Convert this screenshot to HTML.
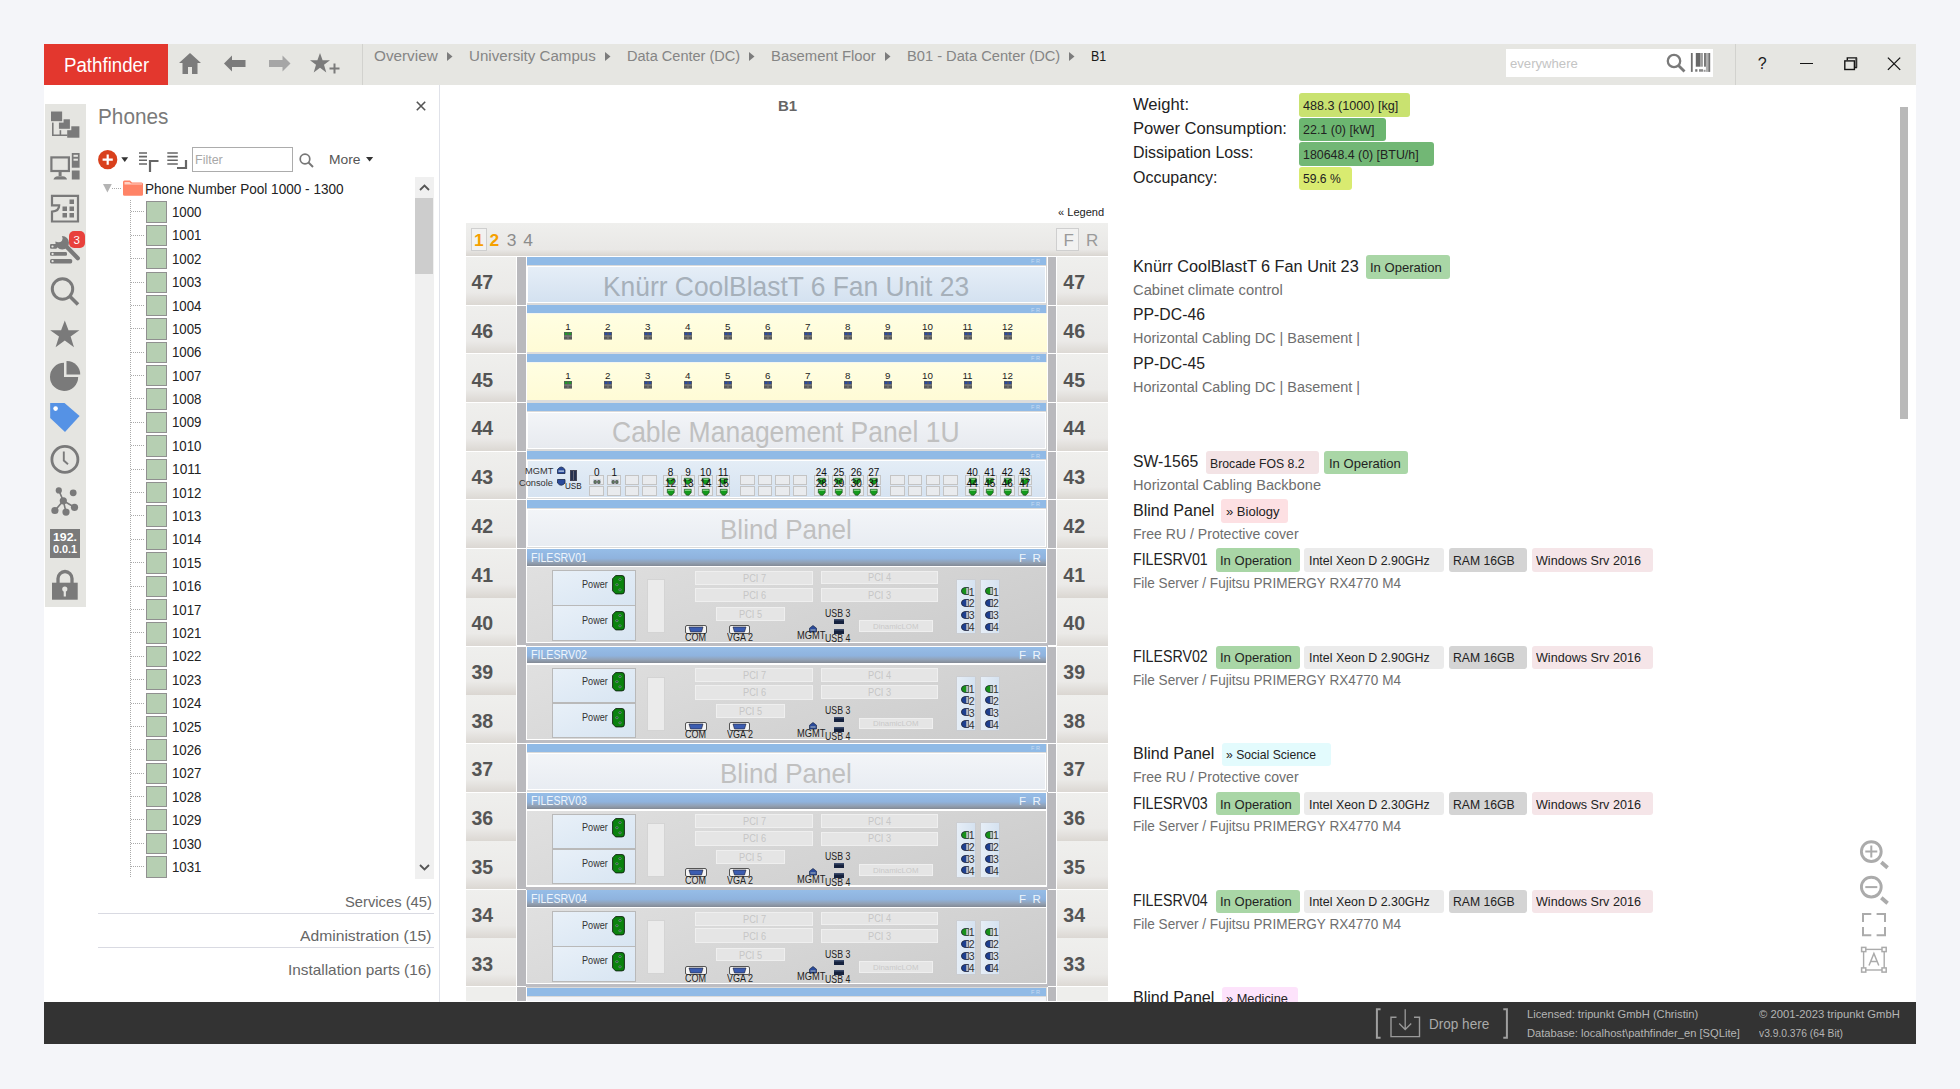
<!DOCTYPE html><html><head><meta charset="utf-8"><style>
html,body{margin:0;padding:0;width:1960px;height:1089px;overflow:hidden;background:#f4f5f9}
body{position:relative;font-family:"Liberation Sans",sans-serif}
.r{position:absolute}
.t{position:absolute;white-space:nowrap;line-height:1;font-family:"Liberation Sans",sans-serif}
svg.r{overflow:visible}
</style></head><body>
<div class="r" style="left:44.0px;top:44.0px;width:1872.0px;height:41.0px;background:#e6e6e2"></div>
<div class="r" style="left:44.0px;top:44.0px;width:124.0px;height:41.0px;background:#e3372e"></div>
<div class="t" style="left:64.2px;top:55.1px;font-size:20px;color:#fff;letter-spacing:0.000px;transform:scaleX(0.9345);transform-origin:0 0;">Pathfinder</div>
<div class="r" style="left:362.0px;top:44.0px;width:1.0px;height:41.0px;background:#d2d2ce"></div>
<div class="r" style="left:1735.0px;top:44.0px;width:1.0px;height:41.0px;background:#d2d2ce"></div>
<div class="t" style="left:374.3px;top:47.9px;font-size:15.5px;color:#858585;letter-spacing:0.000px;transform:scaleX(0.9861);transform-origin:0 0;">Overview</div>
<svg class="r" style="left:446.6px;top:52px" width="6" height="9"><path d="M0 0L5.5 4.5L0 9Z" fill="#7c7c7c"/></svg>
<div class="t" style="left:469.0px;top:47.9px;font-size:15.5px;color:#858585;letter-spacing:0.000px;transform:scaleX(0.9749);transform-origin:0 0;">University Campus</div>
<svg class="r" style="left:605.0px;top:52px" width="6" height="9"><path d="M0 0L5.5 4.5L0 9Z" fill="#7c7c7c"/></svg>
<div class="t" style="left:626.8px;top:47.9px;font-size:15.5px;color:#858585;letter-spacing:0.000px;transform:scaleX(0.9387);transform-origin:0 0;">Data Center (DC)</div>
<svg class="r" style="left:748.9px;top:52px" width="6" height="9"><path d="M0 0L5.5 4.5L0 9Z" fill="#7c7c7c"/></svg>
<div class="t" style="left:771.0px;top:47.9px;font-size:15.5px;color:#858585;letter-spacing:0.000px;transform:scaleX(0.9569);transform-origin:0 0;">Basement Floor</div>
<svg class="r" style="left:885.4px;top:52px" width="6" height="9"><path d="M0 0L5.5 4.5L0 9Z" fill="#7c7c7c"/></svg>
<div class="t" style="left:906.7px;top:47.9px;font-size:15.5px;color:#858585;letter-spacing:0.000px;transform:scaleX(0.9460);transform-origin:0 0;">B01 - Data Center (DC)</div>
<svg class="r" style="left:1069.0px;top:52px" width="6" height="9"><path d="M0 0L5.5 4.5L0 9Z" fill="#7c7c7c"/></svg>
<div class="t" style="left:1090.6px;top:47.7px;font-size:15.5px;color:#1a1a1a;letter-spacing:0.000px;transform:scaleX(0.8017);transform-origin:0 0;">B1</div>
<div class="r" style="left:1506.0px;top:49.2px;width:207.0px;height:28.2px;background:#fff"></div>
<div class="t" style="left:1510.0px;top:57.0px;font-size:13px;color:#c4c4c4;letter-spacing:0.000px;transform:scaleX(1.0089);transform-origin:0 0;">everywhere</div>
<svg class="r" style="left:178.0px;top:52.0px" width="24" height="22" viewBox="0 0 24 22"><path d="M12 1L1 11H4.5V22H10V15H14V22H19.5V11H23Z" fill="#7b7b7b"/></svg>
<svg class="r" style="left:224.0px;top:55.0px" width="22" height="17" viewBox="0 0 22 17"><path d="M0 8.5L8 0.5V5H21.5V12H8V16.5Z" fill="#7b7b7b"/></svg>
<svg class="r" style="left:268.5px;top:55.0px" width="22" height="17" viewBox="0 0 22 17"><path d="M21.5 8.5L13.5 0.5V5H0V12H13.5V16.5Z" fill="#a6a6a6"/></svg>
<svg class="r" style="left:309.0px;top:52.0px" width="32" height="22" viewBox="0 0 32 22"><path d="M11 1L13.6 8.3H21L15 12.8L17.3 20.5L11 15.8L4.7 20.5L7 12.8L1 8.3H8.4Z" fill="#7b7b7b"/><path d="M20.5 16.5H30.5M25.5 11.5V21.5" stroke="#7b7b7b" stroke-width="2"/></svg>
<svg class="r" style="left:1666.0px;top:53.0px" width="20" height="20" viewBox="0 0 20 20"><circle cx="8" cy="8" r="6.2" fill="none" stroke="#7a7a7a" stroke-width="2.3"/><path d="M12.5 12.5L18.5 18.5" stroke="#7a7a7a" stroke-width="2.8"/></svg>
<svg class="r" style="left:1690.0px;top:53.0px" width="21" height="20" viewBox="0 0 21 20"><rect x="0.9" y="0" width="1.8" height="18.9" fill="#6e6e6e"/><rect x="5.8" y="0" width="4.3" height="13.7" fill="#686868"/><rect x="10.1" y="0" width="2.8" height="13.7" fill="#9c9c9c"/><rect x="14.1" y="0" width="1.8" height="13.7" fill="#6a6a6a"/><rect x="15.9" y="0" width="2.4" height="18.9" fill="#b0b0b0"/><rect x="18.3" y="0" width="1.9" height="18.9" fill="#707070"/><rect x="5.2" y="16.2" width="2.2" height="2.5" fill="#777"/><rect x="9" y="16.2" width="4" height="2.5" fill="#888"/><rect x="13.6" y="16.8" width="2" height="2" fill="#999"/></svg>
<div class="t" style="left:1757.8px;top:56.3px;font-size:16px;color:#1a1a1a;letter-spacing:0.000px;">?</div>
<div class="r" style="left:1800.0px;top:62.5px;width:13.0px;height:1.7px;background:#151515"></div>
<svg class="r" style="left:1843.0px;top:56.0px" width="15" height="15" viewBox="0 0 15 15"><rect x="1.8" y="4.9" width="9.6" height="8.6" fill="none" stroke="#151515" stroke-width="1.4"/><path d="M4.3 4.2V1.9H13.4V11.5H11.5" fill="none" stroke="#151515" stroke-width="1.4"/><rect x="12.6" y="2" width="1.6" height="9.5" fill="#333"/></svg>
<svg class="r" style="left:1887.0px;top:57.0px" width="14" height="14" viewBox="0 0 14 14"><path d="M0.9 0.6L13.2 12.9M13.2 0.6L0.9 12.9" stroke="#151515" stroke-width="1.3"/></svg>
<div class="r" style="left:44.0px;top:85.0px;width:1872.0px;height:916.5px;background:#fff"></div>
<div class="r" style="left:44.5px;top:104.0px;width:41.9px;height:502.6px;background:#e5e5e1"></div>
<div class="r" style="left:439.0px;top:85.0px;width:1.2px;height:916.5px;background:#e0e2e9"></div>
<svg class="r" style="left:46.0px;top:106.0px" width="38" height="36" viewBox="0 0 38 36"><path d="M6.8 15.9V29.3H21.5M14.4 23.5V28.8" fill="none" stroke="#7a7a7a" stroke-width="1.6"/><rect x="21.2" y="20.3" width="12.2" height="11.4" fill="#7a7a7a"/><rect x="12.2" y="12.6" width="12.4" height="10.9" fill="#7a7a7a" stroke="#e5e5e1" stroke-width="1.4"/><rect x="4.3" y="4.8" width="12.55" height="11.1" fill="#7a7a7a" stroke="#e5e5e1" stroke-width="1.4"/></svg>
<svg class="r" style="left:50.0px;top:152.0px" width="31" height="29" viewBox="0 0 31 29"><rect x="1.4" y="5.4" width="17.5" height="13.6" fill="none" stroke="#7a7a7a" stroke-width="2.2"/><rect x="8.6" y="19" width="3" height="5" fill="#7a7a7a"/><path d="M3.5 27.5Q4 24.5 8 24.3H12.5Q16.5 24.5 17 27.5Z" fill="#7a7a7a"/><rect x="21.8" y="1" width="7.8" height="14.7" fill="#7a7a7a"/><rect x="21.8" y="18.5" width="7.8" height="9" fill="#7a7a7a"/><rect x="23.5" y="2.8" width="4.4" height="2" fill="#e5e5e1"/><rect x="23.5" y="6.7" width="4.4" height="2" fill="#e5e5e1"/></svg>
<svg class="r" style="left:50.0px;top:194.0px" width="30" height="29" viewBox="0 0 30 29"><path d="M2 11.3V1.9H28V27.5H2V17.7Q9.2 17.2 9.2 11.3Z" fill="none" stroke="#7a7a7a" stroke-width="2.2" stroke-linejoin="miter"/><rect x="19.5" y="5.5" width="4.5" height="4.5" fill="#7a7a7a"/><rect x="12.5" y="12.5" width="4.5" height="4.5" fill="#7a7a7a"/><rect x="19.5" y="12.5" width="4.5" height="4.5" fill="#7a7a7a"/><rect x="12.5" y="19" width="4.5" height="4.5" fill="#7a7a7a"/><rect x="19.5" y="19" width="4.5" height="4.5" fill="#7a7a7a"/></svg>
<svg class="r" style="left:46.0px;top:226.0px" width="40" height="40" viewBox="0 0 40 40"><rect x="4" y="18.1" width="7" height="4.7" rx="1.2" fill="#7a7a7a"/><rect x="4" y="26" width="17" height="3.8" rx="1.2" fill="#7a7a7a"/><rect x="4" y="33" width="22.2" height="4.4" rx="1.6" fill="#7a7a7a"/><circle cx="6.5" cy="20.5" r="1.1" fill="#e5e5e1"/><circle cx="6.6" cy="27.9" r="1.1" fill="#e5e5e1"/><circle cx="6.6" cy="35.2" r="1.1" fill="#e5e5e1"/><path d="M17 17L31.8 32.2" stroke="#e5e5e1" stroke-width="7.5" stroke-linecap="round"/><path d="M17 17L31.8 32.2" stroke="#7a7a7a" stroke-width="4.2" stroke-linecap="round"/><circle cx="16.2" cy="16.8" r="6.8" fill="#7a7a7a"/><circle cx="12.6" cy="12.3" r="3.9" fill="#e5e5e1"/><path d="M8 9L12.6 12.3L10 16Z" fill="#e5e5e1"/></svg>
<div class="r" style="left:69.3px;top:231.0px;width:15.7px;height:16.6px;background:#e8413c;border-radius:5px"></div>
<div class="t" style="left:73.6px;top:235.3px;font-size:11.5px;color:#fff;letter-spacing:0.000px;">3</div>
<svg class="r" style="left:50.0px;top:276.0px" width="31" height="31" viewBox="0 0 31 31"><circle cx="12.5" cy="13" r="10.2" fill="none" stroke="#7a7a7a" stroke-width="3"/><path d="M19.5 20L28 28.5" stroke="#7a7a7a" stroke-width="3.5"/></svg>
<svg class="r" style="left:50.0px;top:320.0px" width="30" height="28" viewBox="0 0 30 28"><path d="M14.8 0.5L18.5 10.2H29.4L20.6 16.6L24 27.2L14.8 20.6L5.6 27.2L9 16.6L0.2 10.2H11.1Z" fill="#7a7a7a"/></svg>
<svg class="r" style="left:50.0px;top:360.0px" width="31" height="32" viewBox="0 0 31 32"><path d="M14 2.8V17H28.2A14.1 14.1 0 1 1 14 2.8Z" fill="#7a7a7a"/><path d="M16.5 1H17A13.3 13.3 0 0 1 30.2 14.5H16.5Z" fill="#7a7a7a"/></svg>
<svg class="r" style="left:50.0px;top:402.0px" width="30" height="31" viewBox="0 0 30 31"><path d="M0.2 1H14.5L29.6 14L15 30L0.2 16Z" fill="#5592e5"/><circle cx="5.6" cy="6.6" r="2.3" fill="#fff"/></svg>
<svg class="r" style="left:50.0px;top:444.0px" width="30" height="30" viewBox="0 0 30 30"><circle cx="14.9" cy="15.4" r="13" fill="none" stroke="#7a7a7a" stroke-width="2.8"/><path d="M13.8 7.5V16.5L18 20.2" fill="none" stroke="#7a7a7a" stroke-width="1.9"/></svg>
<svg class="r" style="left:50.0px;top:486.0px" width="30" height="30" viewBox="0 0 30 30"><path d="M8.8 4.4L13.3 14.8L4.9 24.5M13.3 14.8L16 26.1M13.3 14.8L24.5 21.3" fill="none" stroke="#7a7a7a" stroke-width="1.6"/><circle cx="13.3" cy="14.8" r="3.6" fill="#7a7a7a"/><circle cx="8.8" cy="4.4" r="3.1" fill="#7a7a7a"/><circle cx="23.2" cy="6.8" r="3.4" fill="#7a7a7a"/><circle cx="4.9" cy="24.5" r="3.6" fill="#7a7a7a"/><circle cx="16" cy="26.1" r="3.6" fill="#7a7a7a"/><circle cx="24.5" cy="21.3" r="3.6" fill="#7a7a7a"/></svg>
<div class="r" style="left:50.4px;top:529.0px;width:29.3px;height:28.9px;background:#7a7a7a"></div>
<div class="t" style="left:53.0px;top:532.5px;font-size:10px;color:#fff;letter-spacing:0.000px;transform:scaleX(1.2331);transform-origin:0 0;font-weight:bold;">192.</div>
<div class="t" style="left:53.0px;top:545.0px;font-size:10px;color:#fff;letter-spacing:0.000px;transform:scaleX(1.0791);transform-origin:0 0;font-weight:bold;">0.0.1</div>
<svg class="r" style="left:50.0px;top:569.0px" width="30" height="32" viewBox="0 0 30 32"><path d="M8 14V9.5A7 7 0 0 1 22 9.5V14" fill="none" stroke="#7a7a7a" stroke-width="3.3"/><rect x="2" y="13.7" width="25.7" height="17" fill="#7a7a7a"/><circle cx="14.8" cy="20" r="2.6" fill="#e5e5e1"/><rect x="13.7" y="20" width="2.2" height="7.5" fill="#e5e5e1"/></svg>
<div class="t" style="left:97.7px;top:106.3px;font-size:22.5px;color:#7a7a7a;letter-spacing:0.000px;transform:scaleX(0.9225);transform-origin:0 0;">Phones</div>
<svg class="r" style="left:415.5px;top:101.0px" width="10" height="10" viewBox="0 0 10 10"><path d="M0.8 0.8L9.2 9.2M9.2 0.8L0.8 9.2" stroke="#555" stroke-width="1.6"/></svg>
<svg class="r" style="left:98.0px;top:149.8px" width="32" height="20" viewBox="0 0 32 20"><circle cx="9.7" cy="9.65" r="9.6" fill="#d9401c"/><path d="M4.6 9.65H14.8M9.7 4.5V14.8" stroke="#fff" stroke-width="2.2"/><path d="M23.3 7.2H30.2L26.75 11.9Z" fill="#333"/></svg>
<svg class="r" style="left:139.0px;top:152.0px" width="48" height="18" viewBox="0 0 48 18"><path d="M0 1H8M0 4.6H8M0 8.3H8M0 12H8" stroke="#666" stroke-width="1.6"/><path d="M11 20V9H19.5" fill="none" stroke="#666" stroke-width="2.2"/><path d="M28.3 1H38.8M28.3 4.6H38.8M28.3 8.3H38.8M28.3 12H38.8" stroke="#666" stroke-width="1.6"/><path d="M47 8V16H38" fill="none" stroke="#666" stroke-width="2.2"/></svg>
<div class="r" style="left:191.9px;top:147.3px;width:100.7px;height:24.3px;background:#fff;border:1px solid #acacac;box-sizing:border-box"></div>
<div class="t" style="left:195.3px;top:153.2px;font-size:13.2px;color:#a8a8a8;letter-spacing:0.000px;transform:scaleX(0.9477);transform-origin:0 0;">Filter</div>
<svg class="r" style="left:299.0px;top:153.0px" width="15" height="15" viewBox="0 0 15 15"><circle cx="6" cy="6" r="4.8" fill="none" stroke="#777" stroke-width="1.7"/><path d="M9.5 9.5L14 14" stroke="#777" stroke-width="2"/></svg>
<div class="t" style="left:328.5px;top:153.0px;font-size:13.5px;color:#555;letter-spacing:0.000px;transform:scaleX(1.0241);transform-origin:0 0;">More</div>
<svg class="r" style="left:365.5px;top:157.0px" width="8" height="5" viewBox="0 0 8 5"><path d="M0 0H7.2L3.6 4.5Z" fill="#333"/></svg>
<svg class="r" style="left:103.0px;top:184.0px" width="9" height="9" viewBox="0 0 9 9"><path d="M0 0H8.8L4.4 8.5Z" fill="#b4b4b4"/></svg>
<div class="r" style="left:112.0px;top:187.8px;width:10.0px;height:1.0px;background:repeating-linear-gradient(90deg,#aaa 0 1px,transparent 1px 2px)"></div>
<svg class="r" style="left:123.0px;top:180.4px" width="20" height="16" viewBox="0 0 20 16"><path d="M0 2Q0 0.5 1.5 0.5H7L9 2.5H18.5Q20 2.5 20 4V14.5Q20 15.8 18.5 15.8H1.5Q0 15.8 0 14.5Z" fill="#ff8366"/><path d="M1.5 2H6.5L8 3.5H19V4.5H1.5Z" fill="#ffd2c4"/></svg>
<div class="t" style="left:145.3px;top:182.5px;font-size:13.8px;color:#222;letter-spacing:0.000px;transform:scaleX(0.9847);transform-origin:0 0;">Phone Number Pool 1000 - 1300</div>
<div class="r" style="left:130.2px;top:200.0px;width:1.0px;height:678.0px;background:repeating-linear-gradient(180deg,#aaa 0 1px,transparent 1px 2px)"></div>
<div class="r" style="left:131.0px;top:211.3px;width:14.0px;height:1.0px;background:repeating-linear-gradient(90deg,#aaa 0 1px,transparent 1px 2px)"></div>
<div class="r" style="left:146.0px;top:201.3px;width:21.0px;height:21.4px;background:#b6cfb2;border:1px solid #909090;box-sizing:border-box"></div>
<div class="t" style="left:172.3px;top:205.9px;font-size:13.8px;color:#222;letter-spacing:0.000px;transform:scaleX(0.9609);transform-origin:0 0;">1000</div>
<div class="r" style="left:131.0px;top:234.7px;width:14.0px;height:1.0px;background:repeating-linear-gradient(90deg,#aaa 0 1px,transparent 1px 2px)"></div>
<div class="r" style="left:146.0px;top:224.7px;width:21.0px;height:21.4px;background:#b6cfb2;border:1px solid #909090;box-sizing:border-box"></div>
<div class="t" style="left:172.3px;top:229.3px;font-size:13.8px;color:#222;letter-spacing:0.000px;transform:scaleX(0.9609);transform-origin:0 0;">1001</div>
<div class="r" style="left:131.0px;top:258.1px;width:14.0px;height:1.0px;background:repeating-linear-gradient(90deg,#aaa 0 1px,transparent 1px 2px)"></div>
<div class="r" style="left:146.0px;top:248.1px;width:21.0px;height:21.4px;background:#b6cfb2;border:1px solid #909090;box-sizing:border-box"></div>
<div class="t" style="left:172.3px;top:252.7px;font-size:13.8px;color:#222;letter-spacing:0.000px;transform:scaleX(0.9609);transform-origin:0 0;">1002</div>
<div class="r" style="left:131.0px;top:281.5px;width:14.0px;height:1.0px;background:repeating-linear-gradient(90deg,#aaa 0 1px,transparent 1px 2px)"></div>
<div class="r" style="left:146.0px;top:271.5px;width:21.0px;height:21.4px;background:#b6cfb2;border:1px solid #909090;box-sizing:border-box"></div>
<div class="t" style="left:172.3px;top:276.1px;font-size:13.8px;color:#222;letter-spacing:0.000px;transform:scaleX(0.9609);transform-origin:0 0;">1003</div>
<div class="r" style="left:131.0px;top:304.9px;width:14.0px;height:1.0px;background:repeating-linear-gradient(90deg,#aaa 0 1px,transparent 1px 2px)"></div>
<div class="r" style="left:146.0px;top:294.9px;width:21.0px;height:21.4px;background:#b6cfb2;border:1px solid #909090;box-sizing:border-box"></div>
<div class="t" style="left:172.3px;top:299.5px;font-size:13.8px;color:#222;letter-spacing:0.000px;transform:scaleX(0.9609);transform-origin:0 0;">1004</div>
<div class="r" style="left:131.0px;top:328.2px;width:14.0px;height:1.0px;background:repeating-linear-gradient(90deg,#aaa 0 1px,transparent 1px 2px)"></div>
<div class="r" style="left:146.0px;top:318.2px;width:21.0px;height:21.4px;background:#b6cfb2;border:1px solid #909090;box-sizing:border-box"></div>
<div class="t" style="left:172.3px;top:322.9px;font-size:13.8px;color:#222;letter-spacing:0.000px;transform:scaleX(0.9609);transform-origin:0 0;">1005</div>
<div class="r" style="left:131.0px;top:351.6px;width:14.0px;height:1.0px;background:repeating-linear-gradient(90deg,#aaa 0 1px,transparent 1px 2px)"></div>
<div class="r" style="left:146.0px;top:341.6px;width:21.0px;height:21.4px;background:#b6cfb2;border:1px solid #909090;box-sizing:border-box"></div>
<div class="t" style="left:172.3px;top:346.3px;font-size:13.8px;color:#222;letter-spacing:0.000px;transform:scaleX(0.9609);transform-origin:0 0;">1006</div>
<div class="r" style="left:131.0px;top:375.0px;width:14.0px;height:1.0px;background:repeating-linear-gradient(90deg,#aaa 0 1px,transparent 1px 2px)"></div>
<div class="r" style="left:146.0px;top:365.0px;width:21.0px;height:21.4px;background:#b6cfb2;border:1px solid #909090;box-sizing:border-box"></div>
<div class="t" style="left:172.3px;top:369.7px;font-size:13.8px;color:#222;letter-spacing:0.000px;transform:scaleX(0.9609);transform-origin:0 0;">1007</div>
<div class="r" style="left:131.0px;top:398.4px;width:14.0px;height:1.0px;background:repeating-linear-gradient(90deg,#aaa 0 1px,transparent 1px 2px)"></div>
<div class="r" style="left:146.0px;top:388.4px;width:21.0px;height:21.4px;background:#b6cfb2;border:1px solid #909090;box-sizing:border-box"></div>
<div class="t" style="left:172.3px;top:393.0px;font-size:13.8px;color:#222;letter-spacing:0.000px;transform:scaleX(0.9609);transform-origin:0 0;">1008</div>
<div class="r" style="left:131.0px;top:421.8px;width:14.0px;height:1.0px;background:repeating-linear-gradient(90deg,#aaa 0 1px,transparent 1px 2px)"></div>
<div class="r" style="left:146.0px;top:411.8px;width:21.0px;height:21.4px;background:#b6cfb2;border:1px solid #909090;box-sizing:border-box"></div>
<div class="t" style="left:172.3px;top:416.4px;font-size:13.8px;color:#222;letter-spacing:0.000px;transform:scaleX(0.9609);transform-origin:0 0;">1009</div>
<div class="r" style="left:131.0px;top:445.2px;width:14.0px;height:1.0px;background:repeating-linear-gradient(90deg,#aaa 0 1px,transparent 1px 2px)"></div>
<div class="r" style="left:146.0px;top:435.2px;width:21.0px;height:21.4px;background:#b6cfb2;border:1px solid #909090;box-sizing:border-box"></div>
<div class="t" style="left:172.3px;top:439.8px;font-size:13.8px;color:#222;letter-spacing:0.000px;transform:scaleX(0.9609);transform-origin:0 0;">1010</div>
<div class="r" style="left:131.0px;top:468.6px;width:14.0px;height:1.0px;background:repeating-linear-gradient(90deg,#aaa 0 1px,transparent 1px 2px)"></div>
<div class="r" style="left:146.0px;top:458.6px;width:21.0px;height:21.4px;background:#b6cfb2;border:1px solid #909090;box-sizing:border-box"></div>
<div class="t" style="left:172.3px;top:463.2px;font-size:13.8px;color:#222;letter-spacing:0.000px;transform:scaleX(0.9941);transform-origin:0 0;">1011</div>
<div class="r" style="left:131.0px;top:492.0px;width:14.0px;height:1.0px;background:repeating-linear-gradient(90deg,#aaa 0 1px,transparent 1px 2px)"></div>
<div class="r" style="left:146.0px;top:482.0px;width:21.0px;height:21.4px;background:#b6cfb2;border:1px solid #909090;box-sizing:border-box"></div>
<div class="t" style="left:172.3px;top:486.6px;font-size:13.8px;color:#222;letter-spacing:0.000px;transform:scaleX(0.9609);transform-origin:0 0;">1012</div>
<div class="r" style="left:131.0px;top:515.4px;width:14.0px;height:1.0px;background:repeating-linear-gradient(90deg,#aaa 0 1px,transparent 1px 2px)"></div>
<div class="r" style="left:146.0px;top:505.4px;width:21.0px;height:21.4px;background:#b6cfb2;border:1px solid #909090;box-sizing:border-box"></div>
<div class="t" style="left:172.3px;top:510.0px;font-size:13.8px;color:#222;letter-spacing:0.000px;transform:scaleX(0.9609);transform-origin:0 0;">1013</div>
<div class="r" style="left:131.0px;top:538.8px;width:14.0px;height:1.0px;background:repeating-linear-gradient(90deg,#aaa 0 1px,transparent 1px 2px)"></div>
<div class="r" style="left:146.0px;top:528.8px;width:21.0px;height:21.4px;background:#b6cfb2;border:1px solid #909090;box-sizing:border-box"></div>
<div class="t" style="left:172.3px;top:533.4px;font-size:13.8px;color:#222;letter-spacing:0.000px;transform:scaleX(0.9609);transform-origin:0 0;">1014</div>
<div class="r" style="left:131.0px;top:562.2px;width:14.0px;height:1.0px;background:repeating-linear-gradient(90deg,#aaa 0 1px,transparent 1px 2px)"></div>
<div class="r" style="left:146.0px;top:552.2px;width:21.0px;height:21.4px;background:#b6cfb2;border:1px solid #909090;box-sizing:border-box"></div>
<div class="t" style="left:172.3px;top:556.8px;font-size:13.8px;color:#222;letter-spacing:0.000px;transform:scaleX(0.9609);transform-origin:0 0;">1015</div>
<div class="r" style="left:131.0px;top:585.5px;width:14.0px;height:1.0px;background:repeating-linear-gradient(90deg,#aaa 0 1px,transparent 1px 2px)"></div>
<div class="r" style="left:146.0px;top:575.5px;width:21.0px;height:21.4px;background:#b6cfb2;border:1px solid #909090;box-sizing:border-box"></div>
<div class="t" style="left:172.3px;top:580.2px;font-size:13.8px;color:#222;letter-spacing:0.000px;transform:scaleX(0.9609);transform-origin:0 0;">1016</div>
<div class="r" style="left:131.0px;top:608.9px;width:14.0px;height:1.0px;background:repeating-linear-gradient(90deg,#aaa 0 1px,transparent 1px 2px)"></div>
<div class="r" style="left:146.0px;top:598.9px;width:21.0px;height:21.4px;background:#b6cfb2;border:1px solid #909090;box-sizing:border-box"></div>
<div class="t" style="left:172.3px;top:603.6px;font-size:13.8px;color:#222;letter-spacing:0.000px;transform:scaleX(0.9609);transform-origin:0 0;">1017</div>
<div class="r" style="left:131.0px;top:632.3px;width:14.0px;height:1.0px;background:repeating-linear-gradient(90deg,#aaa 0 1px,transparent 1px 2px)"></div>
<div class="r" style="left:146.0px;top:622.3px;width:21.0px;height:21.4px;background:#b6cfb2;border:1px solid #909090;box-sizing:border-box"></div>
<div class="t" style="left:172.3px;top:626.9px;font-size:13.8px;color:#222;letter-spacing:0.000px;transform:scaleX(0.9609);transform-origin:0 0;">1021</div>
<div class="r" style="left:131.0px;top:655.7px;width:14.0px;height:1.0px;background:repeating-linear-gradient(90deg,#aaa 0 1px,transparent 1px 2px)"></div>
<div class="r" style="left:146.0px;top:645.7px;width:21.0px;height:21.4px;background:#b6cfb2;border:1px solid #909090;box-sizing:border-box"></div>
<div class="t" style="left:172.3px;top:650.3px;font-size:13.8px;color:#222;letter-spacing:0.000px;transform:scaleX(0.9609);transform-origin:0 0;">1022</div>
<div class="r" style="left:131.0px;top:679.1px;width:14.0px;height:1.0px;background:repeating-linear-gradient(90deg,#aaa 0 1px,transparent 1px 2px)"></div>
<div class="r" style="left:146.0px;top:669.1px;width:21.0px;height:21.4px;background:#b6cfb2;border:1px solid #909090;box-sizing:border-box"></div>
<div class="t" style="left:172.3px;top:673.7px;font-size:13.8px;color:#222;letter-spacing:0.000px;transform:scaleX(0.9609);transform-origin:0 0;">1023</div>
<div class="r" style="left:131.0px;top:702.5px;width:14.0px;height:1.0px;background:repeating-linear-gradient(90deg,#aaa 0 1px,transparent 1px 2px)"></div>
<div class="r" style="left:146.0px;top:692.5px;width:21.0px;height:21.4px;background:#b6cfb2;border:1px solid #909090;box-sizing:border-box"></div>
<div class="t" style="left:172.3px;top:697.1px;font-size:13.8px;color:#222;letter-spacing:0.000px;transform:scaleX(0.9609);transform-origin:0 0;">1024</div>
<div class="r" style="left:131.0px;top:725.9px;width:14.0px;height:1.0px;background:repeating-linear-gradient(90deg,#aaa 0 1px,transparent 1px 2px)"></div>
<div class="r" style="left:146.0px;top:715.9px;width:21.0px;height:21.4px;background:#b6cfb2;border:1px solid #909090;box-sizing:border-box"></div>
<div class="t" style="left:172.3px;top:720.5px;font-size:13.8px;color:#222;letter-spacing:0.000px;transform:scaleX(0.9609);transform-origin:0 0;">1025</div>
<div class="r" style="left:131.0px;top:749.3px;width:14.0px;height:1.0px;background:repeating-linear-gradient(90deg,#aaa 0 1px,transparent 1px 2px)"></div>
<div class="r" style="left:146.0px;top:739.3px;width:21.0px;height:21.4px;background:#b6cfb2;border:1px solid #909090;box-sizing:border-box"></div>
<div class="t" style="left:172.3px;top:743.9px;font-size:13.8px;color:#222;letter-spacing:0.000px;transform:scaleX(0.9609);transform-origin:0 0;">1026</div>
<div class="r" style="left:131.0px;top:772.7px;width:14.0px;height:1.0px;background:repeating-linear-gradient(90deg,#aaa 0 1px,transparent 1px 2px)"></div>
<div class="r" style="left:146.0px;top:762.7px;width:21.0px;height:21.4px;background:#b6cfb2;border:1px solid #909090;box-sizing:border-box"></div>
<div class="t" style="left:172.3px;top:767.3px;font-size:13.8px;color:#222;letter-spacing:0.000px;transform:scaleX(0.9609);transform-origin:0 0;">1027</div>
<div class="r" style="left:131.0px;top:796.0px;width:14.0px;height:1.0px;background:repeating-linear-gradient(90deg,#aaa 0 1px,transparent 1px 2px)"></div>
<div class="r" style="left:146.0px;top:786.0px;width:21.0px;height:21.4px;background:#b6cfb2;border:1px solid #909090;box-sizing:border-box"></div>
<div class="t" style="left:172.3px;top:790.7px;font-size:13.8px;color:#222;letter-spacing:0.000px;transform:scaleX(0.9609);transform-origin:0 0;">1028</div>
<div class="r" style="left:131.0px;top:819.4px;width:14.0px;height:1.0px;background:repeating-linear-gradient(90deg,#aaa 0 1px,transparent 1px 2px)"></div>
<div class="r" style="left:146.0px;top:809.4px;width:21.0px;height:21.4px;background:#b6cfb2;border:1px solid #909090;box-sizing:border-box"></div>
<div class="t" style="left:172.3px;top:814.1px;font-size:13.8px;color:#222;letter-spacing:0.000px;transform:scaleX(0.9609);transform-origin:0 0;">1029</div>
<div class="r" style="left:131.0px;top:842.8px;width:14.0px;height:1.0px;background:repeating-linear-gradient(90deg,#aaa 0 1px,transparent 1px 2px)"></div>
<div class="r" style="left:146.0px;top:832.8px;width:21.0px;height:21.4px;background:#b6cfb2;border:1px solid #909090;box-sizing:border-box"></div>
<div class="t" style="left:172.3px;top:837.5px;font-size:13.8px;color:#222;letter-spacing:0.000px;transform:scaleX(0.9609);transform-origin:0 0;">1030</div>
<div class="r" style="left:131.0px;top:866.2px;width:14.0px;height:1.0px;background:repeating-linear-gradient(90deg,#aaa 0 1px,transparent 1px 2px)"></div>
<div class="r" style="left:146.0px;top:856.2px;width:21.0px;height:21.4px;background:#b6cfb2;border:1px solid #909090;box-sizing:border-box"></div>
<div class="t" style="left:172.3px;top:860.8px;font-size:13.8px;color:#222;letter-spacing:0.000px;transform:scaleX(0.9609);transform-origin:0 0;">1031</div>
<div class="r" style="left:415.0px;top:177.2px;width:19.0px;height:701.6px;background:#f0f0f0"></div>
<div class="r" style="left:415.0px;top:198.0px;width:18.0px;height:76.0px;background:#cdcdcd"></div>
<svg class="r" style="left:419.0px;top:184.0px" width="11" height="7" viewBox="0 0 11 7"><path d="M1 6L5.5 1.5L10 6" fill="none" stroke="#555" stroke-width="1.8"/></svg>
<svg class="r" style="left:419.0px;top:864.0px" width="11" height="7" viewBox="0 0 11 7"><path d="M1 1L5.5 5.5L10 1" fill="none" stroke="#555" stroke-width="1.8"/></svg>
<div class="t" style="left:344.5px;top:893.7px;font-size:15px;color:#666;letter-spacing:0.000px;transform:scaleX(0.9834);transform-origin:0 0;">Services (45)</div>
<div class="r" style="left:98.0px;top:913.0px;width:336.2px;height:1.2px;background:#d9dae2"></div>
<div class="t" style="left:300.0px;top:927.9px;font-size:15px;color:#666;letter-spacing:0.000px;transform:scaleX(1.0438);transform-origin:0 0;">Administration (15)</div>
<div class="r" style="left:98.0px;top:947.0px;width:336.2px;height:1.2px;background:#d9dae2"></div>
<div class="t" style="left:288.0px;top:962.3px;font-size:15px;color:#666;letter-spacing:0.000px;transform:scaleX(1.0238);transform-origin:0 0;">Installation parts (16)</div>
<div class="t" style="left:1132.9px;top:96.5px;font-size:15.8px;color:#222;letter-spacing:0.000px;transform:scaleX(1.0511);transform-origin:0 0;">Weight:</div>
<div class="t" style="left:1132.9px;top:120.8px;font-size:15.8px;color:#222;letter-spacing:0.000px;transform:scaleX(1.0500);transform-origin:0 0;">Power Consumption:</div>
<div class="t" style="left:1132.9px;top:145.2px;font-size:15.8px;color:#222;letter-spacing:0.000px;transform:scaleX(1.0089);transform-origin:0 0;">Dissipation Loss:</div>
<div class="t" style="left:1132.9px;top:169.5px;font-size:15.8px;color:#222;letter-spacing:0.000px;transform:scaleX(1.0128);transform-origin:0 0;">Occupancy:</div>
<div class="r" style="left:1298.6px;top:93.0px;width:111.8px;height:23.8px;background:#c9e270;border-radius:3px"></div>
<div class="t" style="left:1302.8px;top:99.9px;font-size:12.2px;color:#222;letter-spacing:0.000px;transform:scaleX(1.0332);transform-origin:0 0;">488.3 (1000) [kg]</div>
<div class="r" style="left:1298.6px;top:117.8px;width:87.6px;height:23.3px;background:#6cb670;border-radius:3px"></div>
<div class="t" style="left:1302.8px;top:124.4px;font-size:12.2px;color:#222;letter-spacing:0.000px;transform:scaleX(1.0239);transform-origin:0 0;">22.1 (0) [kW]</div>
<div class="r" style="left:1298.6px;top:142.1px;width:135.4px;height:23.5px;background:#72b775;border-radius:3px"></div>
<div class="t" style="left:1302.8px;top:148.8px;font-size:12.2px;color:#222;letter-spacing:0.000px;transform:scaleX(1.0155);transform-origin:0 0;">180648.4 (0) [BTU/h]</div>
<div class="r" style="left:1298.6px;top:166.6px;width:53.1px;height:23.3px;background:#d9eb70;border-radius:3px"></div>
<div class="t" style="left:1302.8px;top:173.2px;font-size:12.2px;color:#222;letter-spacing:0.000px;transform:scaleX(0.9926);transform-origin:0 0;">59.6 %</div>
<div class="t" style="left:1132.8px;top:258.8px;font-size:15.6px;color:#222;letter-spacing:0.000px;transform:scaleX(1.0430);transform-origin:0 0;">Knürr CoolBlastT 6 Fan Unit 23</div>
<div class="r" style="left:1365.7px;top:255.2px;width:84.5px;height:23.5px;background:#a9d6a6;border-radius:3px"></div>
<div class="t" style="left:1369.9px;top:261.9px;font-size:12.2px;color:#222;letter-spacing:0.000px;transform:scaleX(1.0694);transform-origin:0 0;">In Operation</div>
<div class="t" style="left:1132.8px;top:282.7px;font-size:14px;color:#6e6e6e;letter-spacing:0.000px;transform:scaleX(1.0519);transform-origin:0 0;">Cabinet climate control</div>
<div class="t" style="left:1132.8px;top:307.3px;font-size:15.6px;color:#222;letter-spacing:0.000px;transform:scaleX(1.0128);transform-origin:0 0;">PP-DC-46</div>
<div class="t" style="left:1132.8px;top:331.2px;font-size:14px;color:#6e6e6e;letter-spacing:0.000px;transform:scaleX(1.0295);transform-origin:0 0;">Horizontal Cabling DC | Basement |</div>
<div class="t" style="left:1132.8px;top:356.0px;font-size:15.6px;color:#222;letter-spacing:0.000px;transform:scaleX(1.0128);transform-origin:0 0;">PP-DC-45</div>
<div class="t" style="left:1132.8px;top:379.9px;font-size:14px;color:#6e6e6e;letter-spacing:0.000px;transform:scaleX(1.0295);transform-origin:0 0;">Horizontal Cabling DC | Basement |</div>
<div class="t" style="left:1132.8px;top:454.4px;font-size:15.6px;color:#222;letter-spacing:0.000px;transform:scaleX(1.0101);transform-origin:0 0;">SW-1565</div>
<div class="r" style="left:1206.0px;top:450.8px;width:113.4px;height:23.5px;background:#f3e3e5;border-radius:3px"></div>
<div class="t" style="left:1210.2px;top:457.5px;font-size:12.2px;color:#222;letter-spacing:0.000px;transform:scaleX(1.0047);transform-origin:0 0;">Brocade FOS 8.2</div>
<div class="r" style="left:1324.3px;top:450.8px;width:83.8px;height:23.5px;background:#a9d6a6;border-radius:3px"></div>
<div class="t" style="left:1328.5px;top:457.5px;font-size:12.2px;color:#222;letter-spacing:0.000px;transform:scaleX(1.0694);transform-origin:0 0;">In Operation</div>
<div class="t" style="left:1132.8px;top:478.3px;font-size:14px;color:#6e6e6e;letter-spacing:0.000px;transform:scaleX(1.0412);transform-origin:0 0;">Horizontal Cabling Backbone</div>
<div class="t" style="left:1132.8px;top:503.0px;font-size:15.6px;color:#222;letter-spacing:0.000px;transform:scaleX(1.0314);transform-origin:0 0;">Blind Panel</div>
<div class="r" style="left:1221.4px;top:499.4px;width:66.6px;height:23.5px;background:#fde0e3;border-radius:3px"></div>
<div class="t" style="left:1225.6px;top:506.1px;font-size:12.2px;color:#222;letter-spacing:0.000px;transform:scaleX(1.0679);transform-origin:0 0;">» Biology</div>
<div class="t" style="left:1132.8px;top:526.9px;font-size:14px;color:#6e6e6e;letter-spacing:0.000px;transform:scaleX(1.0040);transform-origin:0 0;">Free RU / Protective cover</div>
<div class="t" style="left:1132.8px;top:551.8px;font-size:15.6px;color:#222;letter-spacing:0.000px;transform:scaleX(0.9099);transform-origin:0 0;">FILESRV01</div>
<div class="r" style="left:1215.6px;top:548.2px;width:84.3px;height:23.5px;background:#a9d6a6;border-radius:3px"></div>
<div class="t" style="left:1219.8px;top:554.9px;font-size:12.2px;color:#222;letter-spacing:0.000px;transform:scaleX(1.0694);transform-origin:0 0;">In Operation</div>
<div class="r" style="left:1304.3px;top:548.2px;width:140.1px;height:23.5px;background:#ebebeb;border-radius:3px"></div>
<div class="t" style="left:1308.5px;top:554.9px;font-size:12.2px;color:#222;letter-spacing:0.000px;transform:scaleX(1.0179);transform-origin:0 0;">Intel Xeon D 2.90GHz</div>
<div class="r" style="left:1448.8px;top:548.2px;width:78.5px;height:23.5px;background:#d4d4d4;border-radius:3px"></div>
<div class="t" style="left:1453.0px;top:554.9px;font-size:12.2px;color:#222;letter-spacing:0.000px;">RAM 16GB</div>
<div class="r" style="left:1531.7px;top:548.2px;width:121.3px;height:23.5px;background:#f5e5e8;border-radius:3px"></div>
<div class="t" style="left:1535.9px;top:554.9px;font-size:12.2px;color:#222;letter-spacing:0.000px;transform:scaleX(1.0323);transform-origin:0 0;">Windows Srv 2016</div>
<div class="t" style="left:1132.8px;top:575.7px;font-size:14px;color:#6e6e6e;letter-spacing:0.000px;transform:scaleX(0.9685);transform-origin:0 0;">File Server / Fujitsu PRIMERGY RX4770 M4</div>
<div class="t" style="left:1132.8px;top:649.3px;font-size:15.6px;color:#222;letter-spacing:0.000px;transform:scaleX(0.9099);transform-origin:0 0;">FILESRV02</div>
<div class="r" style="left:1215.6px;top:645.7px;width:84.3px;height:23.5px;background:#a9d6a6;border-radius:3px"></div>
<div class="t" style="left:1219.8px;top:652.4px;font-size:12.2px;color:#222;letter-spacing:0.000px;transform:scaleX(1.0694);transform-origin:0 0;">In Operation</div>
<div class="r" style="left:1304.3px;top:645.7px;width:140.1px;height:23.5px;background:#ebebeb;border-radius:3px"></div>
<div class="t" style="left:1308.5px;top:652.4px;font-size:12.2px;color:#222;letter-spacing:0.000px;transform:scaleX(1.0179);transform-origin:0 0;">Intel Xeon D 2.90GHz</div>
<div class="r" style="left:1448.8px;top:645.7px;width:78.5px;height:23.5px;background:#d4d4d4;border-radius:3px"></div>
<div class="t" style="left:1453.0px;top:652.4px;font-size:12.2px;color:#222;letter-spacing:0.000px;">RAM 16GB</div>
<div class="r" style="left:1531.7px;top:645.7px;width:121.3px;height:23.5px;background:#f5e5e8;border-radius:3px"></div>
<div class="t" style="left:1535.9px;top:652.4px;font-size:12.2px;color:#222;letter-spacing:0.000px;transform:scaleX(1.0323);transform-origin:0 0;">Windows Srv 2016</div>
<div class="t" style="left:1132.8px;top:673.2px;font-size:14px;color:#6e6e6e;letter-spacing:0.000px;transform:scaleX(0.9685);transform-origin:0 0;">File Server / Fujitsu PRIMERGY RX4770 M4</div>
<div class="t" style="left:1132.8px;top:746.2px;font-size:15.6px;color:#222;letter-spacing:0.000px;transform:scaleX(1.0314);transform-origin:0 0;">Blind Panel</div>
<div class="r" style="left:1221.6px;top:742.6px;width:109.4px;height:23.5px;background:#e3fbfd;border-radius:3px"></div>
<div class="t" style="left:1225.8px;top:749.3px;font-size:12.2px;color:#222;letter-spacing:0.000px;transform:scaleX(0.9978);transform-origin:0 0;">» Social Science</div>
<div class="t" style="left:1132.8px;top:770.1px;font-size:14px;color:#6e6e6e;letter-spacing:0.000px;transform:scaleX(1.0040);transform-origin:0 0;">Free RU / Protective cover</div>
<div class="t" style="left:1132.8px;top:795.5px;font-size:15.6px;color:#222;letter-spacing:0.000px;transform:scaleX(0.9099);transform-origin:0 0;">FILESRV03</div>
<div class="r" style="left:1215.6px;top:791.9px;width:84.3px;height:23.5px;background:#a9d6a6;border-radius:3px"></div>
<div class="t" style="left:1219.8px;top:798.6px;font-size:12.2px;color:#222;letter-spacing:0.000px;transform:scaleX(1.0694);transform-origin:0 0;">In Operation</div>
<div class="r" style="left:1304.3px;top:791.9px;width:140.1px;height:23.5px;background:#ebebeb;border-radius:3px"></div>
<div class="t" style="left:1308.5px;top:798.6px;font-size:12.2px;color:#222;letter-spacing:0.000px;transform:scaleX(1.0179);transform-origin:0 0;">Intel Xeon D 2.30GHz</div>
<div class="r" style="left:1448.8px;top:791.9px;width:78.5px;height:23.5px;background:#d4d4d4;border-radius:3px"></div>
<div class="t" style="left:1453.0px;top:798.6px;font-size:12.2px;color:#222;letter-spacing:0.000px;">RAM 16GB</div>
<div class="r" style="left:1531.7px;top:791.9px;width:121.3px;height:23.5px;background:#f5e5e8;border-radius:3px"></div>
<div class="t" style="left:1535.9px;top:798.6px;font-size:12.2px;color:#222;letter-spacing:0.000px;transform:scaleX(1.0323);transform-origin:0 0;">Windows Srv 2016</div>
<div class="t" style="left:1132.8px;top:819.4px;font-size:14px;color:#6e6e6e;letter-spacing:0.000px;transform:scaleX(0.9685);transform-origin:0 0;">File Server / Fujitsu PRIMERGY RX4770 M4</div>
<div class="t" style="left:1132.8px;top:893.1px;font-size:15.6px;color:#222;letter-spacing:0.000px;transform:scaleX(0.9099);transform-origin:0 0;">FILESRV04</div>
<div class="r" style="left:1215.6px;top:889.5px;width:84.3px;height:23.5px;background:#a9d6a6;border-radius:3px"></div>
<div class="t" style="left:1219.8px;top:896.2px;font-size:12.2px;color:#222;letter-spacing:0.000px;transform:scaleX(1.0694);transform-origin:0 0;">In Operation</div>
<div class="r" style="left:1304.3px;top:889.5px;width:140.1px;height:23.5px;background:#ebebeb;border-radius:3px"></div>
<div class="t" style="left:1308.5px;top:896.2px;font-size:12.2px;color:#222;letter-spacing:0.000px;transform:scaleX(1.0179);transform-origin:0 0;">Intel Xeon D 2.30GHz</div>
<div class="r" style="left:1448.8px;top:889.5px;width:78.5px;height:23.5px;background:#d4d4d4;border-radius:3px"></div>
<div class="t" style="left:1453.0px;top:896.2px;font-size:12.2px;color:#222;letter-spacing:0.000px;">RAM 16GB</div>
<div class="r" style="left:1531.7px;top:889.5px;width:121.3px;height:23.5px;background:#f5e5e8;border-radius:3px"></div>
<div class="t" style="left:1535.9px;top:896.2px;font-size:12.2px;color:#222;letter-spacing:0.000px;transform:scaleX(1.0323);transform-origin:0 0;">Windows Srv 2016</div>
<div class="t" style="left:1132.8px;top:917.0px;font-size:14px;color:#6e6e6e;letter-spacing:0.000px;transform:scaleX(0.9685);transform-origin:0 0;">File Server / Fujitsu PRIMERGY RX4770 M4</div>
<div class="t" style="left:1132.8px;top:990.3px;font-size:15.6px;color:#222;letter-spacing:0.000px;transform:scaleX(1.0314);transform-origin:0 0;">Blind Panel</div>
<div class="r" style="left:1221.6px;top:986.7px;width:76.4px;height:23.5px;background:#fde3fb;border-radius:3px"></div>
<div class="t" style="left:1225.8px;top:993.4px;font-size:12.2px;color:#222;letter-spacing:0.000px;transform:scaleX(1.0508);transform-origin:0 0;">» Medicine</div>
<div class="r" style="left:1900.0px;top:106.8px;width:8.2px;height:312.7px;background:#b9b9b9"></div>
<svg class="r" style="left:1859.0px;top:840.0px" width="30" height="30" viewBox="0 0 30 30"><circle cx="12.3" cy="11.6" r="9.9" fill="none" stroke="#ababab" stroke-width="2.9"/><path d="M6.3 11.6H18.3M12.3 5.6V17.6" stroke="#ababab" stroke-width="2"/><path d="M22.3 22.3L28.6 27.8" stroke="#ababab" stroke-width="3.8"/></svg>
<svg class="r" style="left:1859.0px;top:875.0px" width="30" height="30" viewBox="0 0 30 30"><circle cx="12.3" cy="12.1" r="9.9" fill="none" stroke="#ababab" stroke-width="2.9"/><path d="M6.3 12.1H18.3" stroke="#ababab" stroke-width="2"/><path d="M22.3 22.8L28.6 28.3" stroke="#ababab" stroke-width="3.8"/></svg>
<svg class="r" style="left:1861.0px;top:912.0px" width="26" height="26" viewBox="0 0 26 26"><path d="M2 10V2H10.3M15.6 2H24V10M24 15V23.3H15.6M10.3 23.3H2V15" fill="none" stroke="#ababab" stroke-width="2"/></svg>
<svg class="r" style="left:1860.0px;top:946.0px" width="28" height="28" viewBox="0 0 28 28"><rect x="3.6" y="3.4" width="20.6" height="20.6" fill="none" stroke="#ababab" stroke-width="1.4"/><rect x="1.6" y="1.4" width="4.2" height="4.2" fill="#fff" stroke="#ababab" stroke-width="1.5"/><rect x="22" y="1.4" width="4.2" height="4.2" fill="#fff" stroke="#ababab" stroke-width="1.5"/><rect x="1.6" y="21.9" width="4.2" height="4.2" fill="#fff" stroke="#ababab" stroke-width="1.5"/><rect x="22" y="21.9" width="4.2" height="4.2" fill="#fff" stroke="#ababab" stroke-width="1.5"/><path d="M9 19.5L13.9 7.5L18.8 19.5M10.6 15.5H17.2" fill="none" stroke="#ababab" stroke-width="1.5"/></svg>
<div class="t" style="left:778.0px;top:98.3px;font-size:15px;color:#666;letter-spacing:0.000px;font-weight:bold;">B1</div>
<div class="t" style="left:1058.3px;top:207.0px;font-size:11.8px;color:#222;letter-spacing:0.000px;transform:scaleX(0.9387);transform-origin:0 0;">« Legend</div>
<div class="r" style="left:465.9px;top:223.0px;width:642.1px;height:32.7px;background:linear-gradient(#efefed 0%,#e9e8e6 80%,#d9d5d0 100%)"></div>
<div class="r" style="left:470.5px;top:228.3px;width:16.3px;height:22.6px;border:1px solid #cfcfcf;box-sizing:border-box;background:#f2f2f1"></div>
<div class="t" style="left:474.0px;top:231.6px;font-size:17.4px;color:#f5a000;letter-spacing:0.000px;font-weight:bold;">1</div>
<div class="t" style="left:489.6px;top:231.6px;font-size:17.4px;color:#f5a000;letter-spacing:0.000px;font-weight:bold;">2</div>
<div class="t" style="left:506.8px;top:231.6px;font-size:17.4px;color:#8c8c8c;letter-spacing:0.000px;">3</div>
<div class="t" style="left:523.2px;top:231.6px;font-size:17.4px;color:#8c8c8c;letter-spacing:0.000px;">4</div>
<div class="r" style="left:1056.2px;top:228.3px;width:23.3px;height:22.6px;border:1px solid #cfcfcf;box-sizing:border-box;background:#f2f2f1"></div>
<div class="t" style="left:1063.5px;top:232.1px;font-size:17px;color:#9a9a9a;letter-spacing:0.000px;">F</div>
<div class="t" style="left:1086.0px;top:232.1px;font-size:17px;color:#9a9a9a;letter-spacing:0.000px;">R</div>
<div class="r" style="left:465.9px;top:256.6px;width:50.0px;height:49.3px;background:linear-gradient(#efefed 0%,#ebeae8 72%,#dad6d1 100%)"></div>
<div class="r" style="left:1057.0px;top:256.6px;width:51.0px;height:49.3px;background:linear-gradient(#efefed 0%,#ebeae8 72%,#dad6d1 100%)"></div>
<div class="t" style="left:471.5px;top:273.3px;font-size:19.5px;color:#555;letter-spacing:0.000px;font-weight:bold;">47</div>
<div class="t" style="left:1063.3px;top:273.3px;font-size:19.5px;color:#555;letter-spacing:0.000px;font-weight:bold;">47</div>
<div class="r" style="left:465.9px;top:305.3px;width:50.0px;height:49.3px;background:linear-gradient(#efefed 0%,#ebeae8 72%,#dad6d1 100%)"></div>
<div class="r" style="left:1057.0px;top:305.3px;width:51.0px;height:49.3px;background:linear-gradient(#efefed 0%,#ebeae8 72%,#dad6d1 100%)"></div>
<div class="t" style="left:471.5px;top:322.0px;font-size:19.5px;color:#555;letter-spacing:0.000px;font-weight:bold;">46</div>
<div class="t" style="left:1063.3px;top:322.0px;font-size:19.5px;color:#555;letter-spacing:0.000px;font-weight:bold;">46</div>
<div class="r" style="left:465.9px;top:354.0px;width:50.0px;height:49.3px;background:linear-gradient(#efefed 0%,#ebeae8 72%,#dad6d1 100%)"></div>
<div class="r" style="left:1057.0px;top:354.0px;width:51.0px;height:49.3px;background:linear-gradient(#efefed 0%,#ebeae8 72%,#dad6d1 100%)"></div>
<div class="t" style="left:471.5px;top:370.7px;font-size:19.5px;color:#555;letter-spacing:0.000px;font-weight:bold;">45</div>
<div class="t" style="left:1063.3px;top:370.7px;font-size:19.5px;color:#555;letter-spacing:0.000px;font-weight:bold;">45</div>
<div class="r" style="left:465.9px;top:402.7px;width:50.0px;height:49.3px;background:linear-gradient(#efefed 0%,#ebeae8 72%,#dad6d1 100%)"></div>
<div class="r" style="left:1057.0px;top:402.7px;width:51.0px;height:49.3px;background:linear-gradient(#efefed 0%,#ebeae8 72%,#dad6d1 100%)"></div>
<div class="t" style="left:471.5px;top:419.4px;font-size:19.5px;color:#555;letter-spacing:0.000px;font-weight:bold;">44</div>
<div class="t" style="left:1063.3px;top:419.4px;font-size:19.5px;color:#555;letter-spacing:0.000px;font-weight:bold;">44</div>
<div class="r" style="left:465.9px;top:451.4px;width:50.0px;height:49.3px;background:linear-gradient(#efefed 0%,#ebeae8 72%,#dad6d1 100%)"></div>
<div class="r" style="left:1057.0px;top:451.4px;width:51.0px;height:49.3px;background:linear-gradient(#efefed 0%,#ebeae8 72%,#dad6d1 100%)"></div>
<div class="t" style="left:471.5px;top:468.1px;font-size:19.5px;color:#555;letter-spacing:0.000px;font-weight:bold;">43</div>
<div class="t" style="left:1063.3px;top:468.1px;font-size:19.5px;color:#555;letter-spacing:0.000px;font-weight:bold;">43</div>
<div class="r" style="left:465.9px;top:500.1px;width:50.0px;height:49.3px;background:linear-gradient(#efefed 0%,#ebeae8 72%,#dad6d1 100%)"></div>
<div class="r" style="left:1057.0px;top:500.1px;width:51.0px;height:49.3px;background:linear-gradient(#efefed 0%,#ebeae8 72%,#dad6d1 100%)"></div>
<div class="t" style="left:471.5px;top:516.8px;font-size:19.5px;color:#555;letter-spacing:0.000px;font-weight:bold;">42</div>
<div class="t" style="left:1063.3px;top:516.8px;font-size:19.5px;color:#555;letter-spacing:0.000px;font-weight:bold;">42</div>
<div class="r" style="left:465.9px;top:548.8px;width:50.0px;height:49.3px;background:linear-gradient(#efefed 0%,#ebeae8 72%,#dad6d1 100%)"></div>
<div class="r" style="left:1057.0px;top:548.8px;width:51.0px;height:49.3px;background:linear-gradient(#efefed 0%,#ebeae8 72%,#dad6d1 100%)"></div>
<div class="t" style="left:471.5px;top:565.5px;font-size:19.5px;color:#555;letter-spacing:0.000px;font-weight:bold;">41</div>
<div class="t" style="left:1063.3px;top:565.5px;font-size:19.5px;color:#555;letter-spacing:0.000px;font-weight:bold;">41</div>
<div class="r" style="left:465.9px;top:597.5px;width:50.0px;height:49.3px;background:linear-gradient(#efefed 0%,#ebeae8 72%,#dad6d1 100%)"></div>
<div class="r" style="left:1057.0px;top:597.5px;width:51.0px;height:49.3px;background:linear-gradient(#efefed 0%,#ebeae8 72%,#dad6d1 100%)"></div>
<div class="t" style="left:471.5px;top:614.2px;font-size:19.5px;color:#555;letter-spacing:0.000px;font-weight:bold;">40</div>
<div class="t" style="left:1063.3px;top:614.2px;font-size:19.5px;color:#555;letter-spacing:0.000px;font-weight:bold;">40</div>
<div class="r" style="left:465.9px;top:646.2px;width:50.0px;height:49.3px;background:linear-gradient(#efefed 0%,#ebeae8 72%,#dad6d1 100%)"></div>
<div class="r" style="left:1057.0px;top:646.2px;width:51.0px;height:49.3px;background:linear-gradient(#efefed 0%,#ebeae8 72%,#dad6d1 100%)"></div>
<div class="t" style="left:471.5px;top:662.9px;font-size:19.5px;color:#555;letter-spacing:0.000px;font-weight:bold;">39</div>
<div class="t" style="left:1063.3px;top:662.9px;font-size:19.5px;color:#555;letter-spacing:0.000px;font-weight:bold;">39</div>
<div class="r" style="left:465.9px;top:694.9px;width:50.0px;height:49.3px;background:linear-gradient(#efefed 0%,#ebeae8 72%,#dad6d1 100%)"></div>
<div class="r" style="left:1057.0px;top:694.9px;width:51.0px;height:49.3px;background:linear-gradient(#efefed 0%,#ebeae8 72%,#dad6d1 100%)"></div>
<div class="t" style="left:471.5px;top:711.6px;font-size:19.5px;color:#555;letter-spacing:0.000px;font-weight:bold;">38</div>
<div class="t" style="left:1063.3px;top:711.6px;font-size:19.5px;color:#555;letter-spacing:0.000px;font-weight:bold;">38</div>
<div class="r" style="left:465.9px;top:743.6px;width:50.0px;height:49.3px;background:linear-gradient(#efefed 0%,#ebeae8 72%,#dad6d1 100%)"></div>
<div class="r" style="left:1057.0px;top:743.6px;width:51.0px;height:49.3px;background:linear-gradient(#efefed 0%,#ebeae8 72%,#dad6d1 100%)"></div>
<div class="t" style="left:471.5px;top:760.3px;font-size:19.5px;color:#555;letter-spacing:0.000px;font-weight:bold;">37</div>
<div class="t" style="left:1063.3px;top:760.3px;font-size:19.5px;color:#555;letter-spacing:0.000px;font-weight:bold;">37</div>
<div class="r" style="left:465.9px;top:792.3px;width:50.0px;height:49.3px;background:linear-gradient(#efefed 0%,#ebeae8 72%,#dad6d1 100%)"></div>
<div class="r" style="left:1057.0px;top:792.3px;width:51.0px;height:49.3px;background:linear-gradient(#efefed 0%,#ebeae8 72%,#dad6d1 100%)"></div>
<div class="t" style="left:471.5px;top:809.0px;font-size:19.5px;color:#555;letter-spacing:0.000px;font-weight:bold;">36</div>
<div class="t" style="left:1063.3px;top:809.0px;font-size:19.5px;color:#555;letter-spacing:0.000px;font-weight:bold;">36</div>
<div class="r" style="left:465.9px;top:841.0px;width:50.0px;height:49.3px;background:linear-gradient(#efefed 0%,#ebeae8 72%,#dad6d1 100%)"></div>
<div class="r" style="left:1057.0px;top:841.0px;width:51.0px;height:49.3px;background:linear-gradient(#efefed 0%,#ebeae8 72%,#dad6d1 100%)"></div>
<div class="t" style="left:471.5px;top:857.7px;font-size:19.5px;color:#555;letter-spacing:0.000px;font-weight:bold;">35</div>
<div class="t" style="left:1063.3px;top:857.7px;font-size:19.5px;color:#555;letter-spacing:0.000px;font-weight:bold;">35</div>
<div class="r" style="left:465.9px;top:889.7px;width:50.0px;height:49.3px;background:linear-gradient(#efefed 0%,#ebeae8 72%,#dad6d1 100%)"></div>
<div class="r" style="left:1057.0px;top:889.7px;width:51.0px;height:49.3px;background:linear-gradient(#efefed 0%,#ebeae8 72%,#dad6d1 100%)"></div>
<div class="t" style="left:471.5px;top:906.4px;font-size:19.5px;color:#555;letter-spacing:0.000px;font-weight:bold;">34</div>
<div class="t" style="left:1063.3px;top:906.4px;font-size:19.5px;color:#555;letter-spacing:0.000px;font-weight:bold;">34</div>
<div class="r" style="left:465.9px;top:938.4px;width:50.0px;height:49.3px;background:linear-gradient(#efefed 0%,#ebeae8 72%,#dad6d1 100%)"></div>
<div class="r" style="left:1057.0px;top:938.4px;width:51.0px;height:49.3px;background:linear-gradient(#efefed 0%,#ebeae8 72%,#dad6d1 100%)"></div>
<div class="t" style="left:471.5px;top:955.1px;font-size:19.5px;color:#555;letter-spacing:0.000px;font-weight:bold;">33</div>
<div class="t" style="left:1063.3px;top:955.1px;font-size:19.5px;color:#555;letter-spacing:0.000px;font-weight:bold;">33</div>
<div class="r" style="left:465.9px;top:987.1px;width:50.0px;height:14.4px;background:#eeeeec"></div>
<div class="r" style="left:1057.0px;top:987.1px;width:51.0px;height:14.4px;background:#eeeeec"></div>
<div class="r" style="left:465.9px;top:304.6px;width:50.0px;height:0.9px;background:#fff"></div>
<div class="r" style="left:1057.0px;top:304.6px;width:51.0px;height:0.9px;background:#fff"></div>
<div class="r" style="left:517.0px;top:256.9px;width:9.0px;height:47.7px;background:#b9b9bd"></div>
<div class="r" style="left:1047.8px;top:256.9px;width:8.7px;height:47.7px;background:#b9b9bd"></div>
<div class="r" style="left:465.9px;top:353.3px;width:50.0px;height:0.9px;background:#fff"></div>
<div class="r" style="left:1057.0px;top:353.3px;width:51.0px;height:0.9px;background:#fff"></div>
<div class="r" style="left:517.0px;top:305.6px;width:9.0px;height:47.7px;background:#b9b9bd"></div>
<div class="r" style="left:1047.8px;top:305.6px;width:8.7px;height:47.7px;background:#b9b9bd"></div>
<div class="r" style="left:465.9px;top:402.0px;width:50.0px;height:0.9px;background:#fff"></div>
<div class="r" style="left:1057.0px;top:402.0px;width:51.0px;height:0.9px;background:#fff"></div>
<div class="r" style="left:517.0px;top:354.3px;width:9.0px;height:47.7px;background:#b9b9bd"></div>
<div class="r" style="left:1047.8px;top:354.3px;width:8.7px;height:47.7px;background:#b9b9bd"></div>
<div class="r" style="left:465.9px;top:450.7px;width:50.0px;height:0.9px;background:#fff"></div>
<div class="r" style="left:1057.0px;top:450.7px;width:51.0px;height:0.9px;background:#fff"></div>
<div class="r" style="left:517.0px;top:403.0px;width:9.0px;height:47.7px;background:#b9b9bd"></div>
<div class="r" style="left:1047.8px;top:403.0px;width:8.7px;height:47.7px;background:#b9b9bd"></div>
<div class="r" style="left:465.9px;top:499.4px;width:50.0px;height:0.9px;background:#fff"></div>
<div class="r" style="left:1057.0px;top:499.4px;width:51.0px;height:0.9px;background:#fff"></div>
<div class="r" style="left:517.0px;top:451.7px;width:9.0px;height:47.7px;background:#b9b9bd"></div>
<div class="r" style="left:1047.8px;top:451.7px;width:8.7px;height:47.7px;background:#b9b9bd"></div>
<div class="r" style="left:465.9px;top:548.1px;width:50.0px;height:0.9px;background:#fff"></div>
<div class="r" style="left:1057.0px;top:548.1px;width:51.0px;height:0.9px;background:#fff"></div>
<div class="r" style="left:517.0px;top:500.4px;width:9.0px;height:47.7px;background:#b9b9bd"></div>
<div class="r" style="left:1047.8px;top:500.4px;width:8.7px;height:47.7px;background:#b9b9bd"></div>
<div class="r" style="left:465.9px;top:645.5px;width:50.0px;height:0.9px;background:#fff"></div>
<div class="r" style="left:1057.0px;top:645.5px;width:51.0px;height:0.9px;background:#fff"></div>
<div class="r" style="left:517.0px;top:549.1px;width:9.0px;height:96.4px;background:#b9b9bd"></div>
<div class="r" style="left:1047.8px;top:549.1px;width:8.7px;height:96.4px;background:#b9b9bd"></div>
<div class="r" style="left:465.9px;top:742.9px;width:50.0px;height:0.9px;background:#fff"></div>
<div class="r" style="left:1057.0px;top:742.9px;width:51.0px;height:0.9px;background:#fff"></div>
<div class="r" style="left:517.0px;top:646.5px;width:9.0px;height:96.4px;background:#b9b9bd"></div>
<div class="r" style="left:1047.8px;top:646.5px;width:8.7px;height:96.4px;background:#b9b9bd"></div>
<div class="r" style="left:465.9px;top:791.6px;width:50.0px;height:0.9px;background:#fff"></div>
<div class="r" style="left:1057.0px;top:791.6px;width:51.0px;height:0.9px;background:#fff"></div>
<div class="r" style="left:517.0px;top:743.9px;width:9.0px;height:47.7px;background:#b9b9bd"></div>
<div class="r" style="left:1047.8px;top:743.9px;width:8.7px;height:47.7px;background:#b9b9bd"></div>
<div class="r" style="left:465.9px;top:889.0px;width:50.0px;height:0.9px;background:#fff"></div>
<div class="r" style="left:1057.0px;top:889.0px;width:51.0px;height:0.9px;background:#fff"></div>
<div class="r" style="left:517.0px;top:792.6px;width:9.0px;height:96.4px;background:#b9b9bd"></div>
<div class="r" style="left:1047.8px;top:792.6px;width:8.7px;height:96.4px;background:#b9b9bd"></div>
<div class="r" style="left:465.9px;top:986.4px;width:50.0px;height:0.9px;background:#fff"></div>
<div class="r" style="left:1057.0px;top:986.4px;width:51.0px;height:0.9px;background:#fff"></div>
<div class="r" style="left:517.0px;top:890.0px;width:9.0px;height:96.4px;background:#b9b9bd"></div>
<div class="r" style="left:1047.8px;top:890.0px;width:8.7px;height:96.4px;background:#b9b9bd"></div>
<div class="r" style="left:465.9px;top:1001.5px;width:50.0px;height:0.9px;background:#fff"></div>
<div class="r" style="left:1057.0px;top:1001.5px;width:51.0px;height:0.9px;background:#fff"></div>
<div class="r" style="left:517.0px;top:987.4px;width:9.0px;height:14.1px;background:#b9b9bd"></div>
<div class="r" style="left:1047.8px;top:987.4px;width:8.7px;height:14.1px;background:#b9b9bd"></div>
<div class="r" style="left:526.5px;top:256.6px;width:520.4px;height:48.0px;background:#dadada"></div>
<div class="r" style="left:527.0px;top:256.6px;width:519.4px;height:8.0px;background:#90bae6"></div>
<div class="t" style="left:1031.0px;top:258.9px;font-size:5px;color:#c6dbf2;letter-spacing:0.000px;transform:scaleX(1.1174);transform-origin:0 0;">F R</div>
<div class="r" style="left:527.0px;top:265.6px;width:519.4px;height:37.8px;background:linear-gradient(#e6eef7,#d3e1f0);box-shadow:inset 0 0 0 1px #fff"></div>
<div class="t" style="left:603.0px;top:272.1px;font-size:28.3px;color:#a6b0ba;letter-spacing:0.000px;transform:scaleX(0.9322);transform-origin:0 0;">Knürr CoolBlastT 6 Fan Unit 23</div>
<div class="r" style="left:526.5px;top:305.3px;width:520.7px;height:48.7px;background:#dcdcdc"></div>
<div class="r" style="left:527.0px;top:305.3px;width:519.4px;height:8.0px;background:#90bae6"></div>
<div class="t" style="left:1031.0px;top:307.6px;font-size:5px;color:#c6dbf2;letter-spacing:0.000px;transform:scaleX(1.1174);transform-origin:0 0;">F R</div>
<div class="r" style="left:526.5px;top:313.3px;width:520.7px;height:1.0px;background:#f4f6f0"></div>
<div class="r" style="left:526.5px;top:314.3px;width:520.7px;height:37.4px;background:linear-gradient(#fffee2,#fffbd6)"></div>
<div class="t" style="left:565.2px;top:321.8px;font-size:9.8px;color:#222;letter-spacing:0.000px;">1</div>
<svg class="r" style="left:563.9px;top:332.4px" width="8" height="7.6" viewBox="0 0 8 7.6"><rect x="0" y="0" width="8" height="7.6" fill="#5a5a5a"/><rect x="0.8" y="0.6" width="2.6" height="2.4" fill="#1f9a2a"/><rect x="4.6" y="0.6" width="2.6" height="2.4" fill="#1f9a2a"/><rect x="0" y="3.6" width="8" height="0.9" fill="#8a8a8a"/><rect x="3.6" y="4.5" width="0.8" height="3.1" fill="#8a8a8a"/></svg>
<div class="t" style="left:605.1px;top:321.8px;font-size:9.8px;color:#222;letter-spacing:0.000px;">2</div>
<svg class="r" style="left:603.9px;top:332.4px" width="8" height="7.6" viewBox="0 0 8 7.6"><rect x="0" y="0" width="8" height="7.6" fill="#5a5a5a"/><rect x="0.8" y="0.6" width="2.6" height="2.4" fill="#2a4aa0"/><rect x="4.6" y="0.6" width="2.6" height="2.4" fill="#2a4aa0"/><rect x="0" y="3.6" width="8" height="0.9" fill="#8a8a8a"/><rect x="3.6" y="4.5" width="0.8" height="3.1" fill="#8a8a8a"/></svg>
<div class="t" style="left:645.1px;top:321.8px;font-size:9.8px;color:#222;letter-spacing:0.000px;">3</div>
<svg class="r" style="left:643.8px;top:332.4px" width="8" height="7.6" viewBox="0 0 8 7.6"><rect x="0" y="0" width="8" height="7.6" fill="#5a5a5a"/><rect x="0.8" y="0.6" width="2.6" height="2.4" fill="#2a4aa0"/><rect x="4.6" y="0.6" width="2.6" height="2.4" fill="#2a4aa0"/><rect x="0" y="3.6" width="8" height="0.9" fill="#8a8a8a"/><rect x="3.6" y="4.5" width="0.8" height="3.1" fill="#8a8a8a"/></svg>
<div class="t" style="left:685.1px;top:321.8px;font-size:9.8px;color:#222;letter-spacing:0.000px;">4</div>
<svg class="r" style="left:683.8px;top:332.4px" width="8" height="7.6" viewBox="0 0 8 7.6"><rect x="0" y="0" width="8" height="7.6" fill="#5a5a5a"/><rect x="0.8" y="0.6" width="2.6" height="2.4" fill="#2a4aa0"/><rect x="4.6" y="0.6" width="2.6" height="2.4" fill="#2a4aa0"/><rect x="0" y="3.6" width="8" height="0.9" fill="#8a8a8a"/><rect x="3.6" y="4.5" width="0.8" height="3.1" fill="#8a8a8a"/></svg>
<div class="t" style="left:725.0px;top:321.8px;font-size:9.8px;color:#222;letter-spacing:0.000px;">5</div>
<svg class="r" style="left:723.7px;top:332.4px" width="8" height="7.6" viewBox="0 0 8 7.6"><rect x="0" y="0" width="8" height="7.6" fill="#5a5a5a"/><rect x="0.8" y="0.6" width="2.6" height="2.4" fill="#2a4aa0"/><rect x="4.6" y="0.6" width="2.6" height="2.4" fill="#2a4aa0"/><rect x="0" y="3.6" width="8" height="0.9" fill="#8a8a8a"/><rect x="3.6" y="4.5" width="0.8" height="3.1" fill="#8a8a8a"/></svg>
<div class="t" style="left:765.0px;top:321.8px;font-size:9.8px;color:#222;letter-spacing:0.000px;">6</div>
<svg class="r" style="left:763.7px;top:332.4px" width="8" height="7.6" viewBox="0 0 8 7.6"><rect x="0" y="0" width="8" height="7.6" fill="#5a5a5a"/><rect x="0.8" y="0.6" width="2.6" height="2.4" fill="#2a4aa0"/><rect x="4.6" y="0.6" width="2.6" height="2.4" fill="#2a4aa0"/><rect x="0" y="3.6" width="8" height="0.9" fill="#8a8a8a"/><rect x="3.6" y="4.5" width="0.8" height="3.1" fill="#8a8a8a"/></svg>
<div class="t" style="left:804.9px;top:321.8px;font-size:9.8px;color:#222;letter-spacing:0.000px;">7</div>
<svg class="r" style="left:803.7px;top:332.4px" width="8" height="7.6" viewBox="0 0 8 7.6"><rect x="0" y="0" width="8" height="7.6" fill="#5a5a5a"/><rect x="0.8" y="0.6" width="2.6" height="2.4" fill="#2a4aa0"/><rect x="4.6" y="0.6" width="2.6" height="2.4" fill="#2a4aa0"/><rect x="0" y="3.6" width="8" height="0.9" fill="#8a8a8a"/><rect x="3.6" y="4.5" width="0.8" height="3.1" fill="#8a8a8a"/></svg>
<div class="t" style="left:844.9px;top:321.8px;font-size:9.8px;color:#222;letter-spacing:0.000px;">8</div>
<svg class="r" style="left:843.6px;top:332.4px" width="8" height="7.6" viewBox="0 0 8 7.6"><rect x="0" y="0" width="8" height="7.6" fill="#5a5a5a"/><rect x="0.8" y="0.6" width="2.6" height="2.4" fill="#2a4aa0"/><rect x="4.6" y="0.6" width="2.6" height="2.4" fill="#2a4aa0"/><rect x="0" y="3.6" width="8" height="0.9" fill="#8a8a8a"/><rect x="3.6" y="4.5" width="0.8" height="3.1" fill="#8a8a8a"/></svg>
<div class="t" style="left:884.9px;top:321.8px;font-size:9.8px;color:#222;letter-spacing:0.000px;">9</div>
<svg class="r" style="left:883.6px;top:332.4px" width="8" height="7.6" viewBox="0 0 8 7.6"><rect x="0" y="0" width="8" height="7.6" fill="#5a5a5a"/><rect x="0.8" y="0.6" width="2.6" height="2.4" fill="#2a4aa0"/><rect x="4.6" y="0.6" width="2.6" height="2.4" fill="#2a4aa0"/><rect x="0" y="3.6" width="8" height="0.9" fill="#8a8a8a"/><rect x="3.6" y="4.5" width="0.8" height="3.1" fill="#8a8a8a"/></svg>
<div class="t" style="left:922.1px;top:321.8px;font-size:9.8px;color:#222;letter-spacing:0.000px;">10</div>
<svg class="r" style="left:923.5px;top:332.4px" width="8" height="7.6" viewBox="0 0 8 7.6"><rect x="0" y="0" width="8" height="7.6" fill="#5a5a5a"/><rect x="0.8" y="0.6" width="2.6" height="2.4" fill="#2a4aa0"/><rect x="4.6" y="0.6" width="2.6" height="2.4" fill="#2a4aa0"/><rect x="0" y="3.6" width="8" height="0.9" fill="#8a8a8a"/><rect x="3.6" y="4.5" width="0.8" height="3.1" fill="#8a8a8a"/></svg>
<div class="t" style="left:962.4px;top:321.8px;font-size:9.8px;color:#222;letter-spacing:0.000px;">11</div>
<svg class="r" style="left:963.5px;top:332.4px" width="8" height="7.6" viewBox="0 0 8 7.6"><rect x="0" y="0" width="8" height="7.6" fill="#5a5a5a"/><rect x="0.8" y="0.6" width="2.6" height="2.4" fill="#2a4aa0"/><rect x="4.6" y="0.6" width="2.6" height="2.4" fill="#2a4aa0"/><rect x="0" y="3.6" width="8" height="0.9" fill="#8a8a8a"/><rect x="3.6" y="4.5" width="0.8" height="3.1" fill="#8a8a8a"/></svg>
<div class="t" style="left:1002.0px;top:321.8px;font-size:9.8px;color:#222;letter-spacing:0.000px;">12</div>
<svg class="r" style="left:1003.5px;top:332.4px" width="8" height="7.6" viewBox="0 0 8 7.6"><rect x="0" y="0" width="8" height="7.6" fill="#5a5a5a"/><rect x="0.8" y="0.6" width="2.6" height="2.4" fill="#2a4aa0"/><rect x="4.6" y="0.6" width="2.6" height="2.4" fill="#2a4aa0"/><rect x="0" y="3.6" width="8" height="0.9" fill="#8a8a8a"/><rect x="3.6" y="4.5" width="0.8" height="3.1" fill="#8a8a8a"/></svg>
<div class="r" style="left:526.5px;top:354.0px;width:520.7px;height:48.7px;background:#dcdcdc"></div>
<div class="r" style="left:527.0px;top:354.0px;width:519.4px;height:8.0px;background:#90bae6"></div>
<div class="t" style="left:1031.0px;top:356.3px;font-size:5px;color:#c6dbf2;letter-spacing:0.000px;transform:scaleX(1.1174);transform-origin:0 0;">F R</div>
<div class="r" style="left:526.5px;top:362.0px;width:520.7px;height:1.0px;background:#f4f6f0"></div>
<div class="r" style="left:526.5px;top:363.0px;width:520.7px;height:37.4px;background:linear-gradient(#fffee2,#fffbd6)"></div>
<div class="t" style="left:565.2px;top:370.5px;font-size:9.8px;color:#222;letter-spacing:0.000px;">1</div>
<svg class="r" style="left:563.9px;top:381.1px" width="8" height="7.6" viewBox="0 0 8 7.6"><rect x="0" y="0" width="8" height="7.6" fill="#5a5a5a"/><rect x="0.8" y="0.6" width="2.6" height="2.4" fill="#1f9a2a"/><rect x="4.6" y="0.6" width="2.6" height="2.4" fill="#1f9a2a"/><rect x="0" y="3.6" width="8" height="0.9" fill="#8a8a8a"/><rect x="3.6" y="4.5" width="0.8" height="3.1" fill="#8a8a8a"/></svg>
<div class="t" style="left:605.1px;top:370.5px;font-size:9.8px;color:#222;letter-spacing:0.000px;">2</div>
<svg class="r" style="left:603.9px;top:381.1px" width="8" height="7.6" viewBox="0 0 8 7.6"><rect x="0" y="0" width="8" height="7.6" fill="#5a5a5a"/><rect x="0.8" y="0.6" width="2.6" height="2.4" fill="#2a4aa0"/><rect x="4.6" y="0.6" width="2.6" height="2.4" fill="#2a4aa0"/><rect x="0" y="3.6" width="8" height="0.9" fill="#8a8a8a"/><rect x="3.6" y="4.5" width="0.8" height="3.1" fill="#8a8a8a"/></svg>
<div class="t" style="left:645.1px;top:370.5px;font-size:9.8px;color:#222;letter-spacing:0.000px;">3</div>
<svg class="r" style="left:643.8px;top:381.1px" width="8" height="7.6" viewBox="0 0 8 7.6"><rect x="0" y="0" width="8" height="7.6" fill="#5a5a5a"/><rect x="0.8" y="0.6" width="2.6" height="2.4" fill="#2a4aa0"/><rect x="4.6" y="0.6" width="2.6" height="2.4" fill="#2a4aa0"/><rect x="0" y="3.6" width="8" height="0.9" fill="#8a8a8a"/><rect x="3.6" y="4.5" width="0.8" height="3.1" fill="#8a8a8a"/></svg>
<div class="t" style="left:685.1px;top:370.5px;font-size:9.8px;color:#222;letter-spacing:0.000px;">4</div>
<svg class="r" style="left:683.8px;top:381.1px" width="8" height="7.6" viewBox="0 0 8 7.6"><rect x="0" y="0" width="8" height="7.6" fill="#5a5a5a"/><rect x="0.8" y="0.6" width="2.6" height="2.4" fill="#2a4aa0"/><rect x="4.6" y="0.6" width="2.6" height="2.4" fill="#2a4aa0"/><rect x="0" y="3.6" width="8" height="0.9" fill="#8a8a8a"/><rect x="3.6" y="4.5" width="0.8" height="3.1" fill="#8a8a8a"/></svg>
<div class="t" style="left:725.0px;top:370.5px;font-size:9.8px;color:#222;letter-spacing:0.000px;">5</div>
<svg class="r" style="left:723.7px;top:381.1px" width="8" height="7.6" viewBox="0 0 8 7.6"><rect x="0" y="0" width="8" height="7.6" fill="#5a5a5a"/><rect x="0.8" y="0.6" width="2.6" height="2.4" fill="#2a4aa0"/><rect x="4.6" y="0.6" width="2.6" height="2.4" fill="#2a4aa0"/><rect x="0" y="3.6" width="8" height="0.9" fill="#8a8a8a"/><rect x="3.6" y="4.5" width="0.8" height="3.1" fill="#8a8a8a"/></svg>
<div class="t" style="left:765.0px;top:370.5px;font-size:9.8px;color:#222;letter-spacing:0.000px;">6</div>
<svg class="r" style="left:763.7px;top:381.1px" width="8" height="7.6" viewBox="0 0 8 7.6"><rect x="0" y="0" width="8" height="7.6" fill="#5a5a5a"/><rect x="0.8" y="0.6" width="2.6" height="2.4" fill="#2a4aa0"/><rect x="4.6" y="0.6" width="2.6" height="2.4" fill="#2a4aa0"/><rect x="0" y="3.6" width="8" height="0.9" fill="#8a8a8a"/><rect x="3.6" y="4.5" width="0.8" height="3.1" fill="#8a8a8a"/></svg>
<div class="t" style="left:804.9px;top:370.5px;font-size:9.8px;color:#222;letter-spacing:0.000px;">7</div>
<svg class="r" style="left:803.7px;top:381.1px" width="8" height="7.6" viewBox="0 0 8 7.6"><rect x="0" y="0" width="8" height="7.6" fill="#5a5a5a"/><rect x="0.8" y="0.6" width="2.6" height="2.4" fill="#2a4aa0"/><rect x="4.6" y="0.6" width="2.6" height="2.4" fill="#2a4aa0"/><rect x="0" y="3.6" width="8" height="0.9" fill="#8a8a8a"/><rect x="3.6" y="4.5" width="0.8" height="3.1" fill="#8a8a8a"/></svg>
<div class="t" style="left:844.9px;top:370.5px;font-size:9.8px;color:#222;letter-spacing:0.000px;">8</div>
<svg class="r" style="left:843.6px;top:381.1px" width="8" height="7.6" viewBox="0 0 8 7.6"><rect x="0" y="0" width="8" height="7.6" fill="#5a5a5a"/><rect x="0.8" y="0.6" width="2.6" height="2.4" fill="#2a4aa0"/><rect x="4.6" y="0.6" width="2.6" height="2.4" fill="#2a4aa0"/><rect x="0" y="3.6" width="8" height="0.9" fill="#8a8a8a"/><rect x="3.6" y="4.5" width="0.8" height="3.1" fill="#8a8a8a"/></svg>
<div class="t" style="left:884.9px;top:370.5px;font-size:9.8px;color:#222;letter-spacing:0.000px;">9</div>
<svg class="r" style="left:883.6px;top:381.1px" width="8" height="7.6" viewBox="0 0 8 7.6"><rect x="0" y="0" width="8" height="7.6" fill="#5a5a5a"/><rect x="0.8" y="0.6" width="2.6" height="2.4" fill="#2a4aa0"/><rect x="4.6" y="0.6" width="2.6" height="2.4" fill="#2a4aa0"/><rect x="0" y="3.6" width="8" height="0.9" fill="#8a8a8a"/><rect x="3.6" y="4.5" width="0.8" height="3.1" fill="#8a8a8a"/></svg>
<div class="t" style="left:922.1px;top:370.5px;font-size:9.8px;color:#222;letter-spacing:0.000px;">10</div>
<svg class="r" style="left:923.5px;top:381.1px" width="8" height="7.6" viewBox="0 0 8 7.6"><rect x="0" y="0" width="8" height="7.6" fill="#5a5a5a"/><rect x="0.8" y="0.6" width="2.6" height="2.4" fill="#2a4aa0"/><rect x="4.6" y="0.6" width="2.6" height="2.4" fill="#2a4aa0"/><rect x="0" y="3.6" width="8" height="0.9" fill="#8a8a8a"/><rect x="3.6" y="4.5" width="0.8" height="3.1" fill="#8a8a8a"/></svg>
<div class="t" style="left:962.4px;top:370.5px;font-size:9.8px;color:#222;letter-spacing:0.000px;">11</div>
<svg class="r" style="left:963.5px;top:381.1px" width="8" height="7.6" viewBox="0 0 8 7.6"><rect x="0" y="0" width="8" height="7.6" fill="#5a5a5a"/><rect x="0.8" y="0.6" width="2.6" height="2.4" fill="#2a4aa0"/><rect x="4.6" y="0.6" width="2.6" height="2.4" fill="#2a4aa0"/><rect x="0" y="3.6" width="8" height="0.9" fill="#8a8a8a"/><rect x="3.6" y="4.5" width="0.8" height="3.1" fill="#8a8a8a"/></svg>
<div class="t" style="left:1002.0px;top:370.5px;font-size:9.8px;color:#222;letter-spacing:0.000px;">12</div>
<svg class="r" style="left:1003.5px;top:381.1px" width="8" height="7.6" viewBox="0 0 8 7.6"><rect x="0" y="0" width="8" height="7.6" fill="#5a5a5a"/><rect x="0.8" y="0.6" width="2.6" height="2.4" fill="#2a4aa0"/><rect x="4.6" y="0.6" width="2.6" height="2.4" fill="#2a4aa0"/><rect x="0" y="3.6" width="8" height="0.9" fill="#8a8a8a"/><rect x="3.6" y="4.5" width="0.8" height="3.1" fill="#8a8a8a"/></svg>
<div class="r" style="left:526.5px;top:402.7px;width:520.4px;height:48.0px;background:#dadada"></div>
<div class="r" style="left:527.0px;top:402.7px;width:519.4px;height:8.0px;background:#90bae6"></div>
<div class="t" style="left:1031.0px;top:405.0px;font-size:5px;color:#c6dbf2;letter-spacing:0.000px;transform:scaleX(1.1174);transform-origin:0 0;">F R</div>
<div class="r" style="left:527.0px;top:411.7px;width:519.4px;height:37.8px;background:linear-gradient(#f3f5f8,#e7eaef);box-shadow:inset 0 0 0 1px #fff"></div>
<div class="t" style="left:612.3px;top:418.0px;font-size:28.6px;color:#c0c0c0;letter-spacing:0.000px;transform:scaleX(0.9267);transform-origin:0 0;">Cable Management Panel 1U</div>
<div class="r" style="left:526.5px;top:451.4px;width:520.4px;height:48.0px;background:#dadada"></div>
<div class="r" style="left:527.0px;top:451.4px;width:519.4px;height:8.0px;background:#90bae6"></div>
<div class="t" style="left:1031.0px;top:453.7px;font-size:5px;color:#c6dbf2;letter-spacing:0.000px;transform:scaleX(1.1174);transform-origin:0 0;">F R</div>
<div class="r" style="left:527.0px;top:460.4px;width:519.4px;height:37.8px;background:linear-gradient(#e4edf6,#d6e3f1);box-shadow:inset 0 0 0 1px #fff"></div>
<div class="r" style="left:526.5px;top:500.1px;width:520.4px;height:48.0px;background:#dadada"></div>
<div class="r" style="left:527.0px;top:500.1px;width:519.4px;height:8.0px;background:#90bae6"></div>
<div class="t" style="left:1031.0px;top:502.4px;font-size:5px;color:#c6dbf2;letter-spacing:0.000px;transform:scaleX(1.1174);transform-origin:0 0;">F R</div>
<div class="r" style="left:527.0px;top:509.1px;width:519.4px;height:37.8px;background:linear-gradient(#f3f5f8,#e8ecf2);box-shadow:inset 0 0 0 1px #fff"></div>
<div class="t" style="left:720.2px;top:515.1px;font-size:28.3px;color:#c0c0c0;letter-spacing:0.000px;transform:scaleX(0.9205);transform-origin:0 0;">Blind Panel</div>
<div class="r" style="left:526.5px;top:743.6px;width:520.4px;height:48.0px;background:#dadada"></div>
<div class="r" style="left:527.0px;top:743.6px;width:519.4px;height:8.0px;background:#90bae6"></div>
<div class="t" style="left:1031.0px;top:745.9px;font-size:5px;color:#c6dbf2;letter-spacing:0.000px;transform:scaleX(1.1174);transform-origin:0 0;">F R</div>
<div class="r" style="left:527.0px;top:752.6px;width:519.4px;height:37.8px;background:linear-gradient(#f3f5f8,#e8ecf2);box-shadow:inset 0 0 0 1px #fff"></div>
<div class="t" style="left:720.2px;top:758.6px;font-size:28.3px;color:#c0c0c0;letter-spacing:0.000px;transform:scaleX(0.9205);transform-origin:0 0;">Blind Panel</div>
<div class="r" style="left:526.5px;top:987.1px;width:520.4px;height:14.4px;background:#dadada"></div>
<div class="r" style="left:527.0px;top:988.0px;width:519.4px;height:8.0px;background:#90bae6"></div>
<div class="t" style="left:1031.0px;top:990.3px;font-size:5px;color:#c6dbf2;letter-spacing:0.000px;transform:scaleX(1.1174);transform-origin:0 0;">F R</div>
<div class="r" style="left:527.0px;top:996.6px;width:519.4px;height:4.9px;background:#f2f4f8"></div>
<div class="r" style="left:526.0px;top:548.5px;width:521.5px;height:97.2px;background:#bdbdc2"></div>
<div class="r" style="left:526.0px;top:548.8px;width:521.4px;height:94.3px;background:#fff"></div>
<div class="r" style="left:527.0px;top:549.3px;width:519.4px;height:16.4px;background:linear-gradient(#96bde7 0%,#8fb3de 55%,#92a1b4 80%,#838a95 100%)"></div>
<div class="t" style="left:530.8px;top:551.7px;font-size:12.6px;color:#eef5fb;letter-spacing:0.000px;transform:scaleX(0.8446);transform-origin:0 0;">FILESRV01</div>
<div class="t" style="left:1018.9px;top:552.7px;font-size:11.5px;color:#eef5fb;letter-spacing:0.000px;">F</div>
<div class="t" style="left:1032.4px;top:552.7px;font-size:11.5px;color:#eef5fb;letter-spacing:0.000px;">R</div>
<div class="r" style="left:527.0px;top:567.1px;width:519.4px;height:74.9px;background:linear-gradient(160deg,#e0e0e0,#cbcbcb)"></div>
<div class="r" style="left:551.7px;top:570.4px;width:84.7px;height:35.6px;background:linear-gradient(160deg,#e8f0f8,#d8e5f2);border:1px solid #b9b9b9;box-sizing:border-box"></div>
<div class="t" style="left:582.0px;top:578.6px;font-size:10.5px;color:#333;letter-spacing:0.000px;transform:scaleX(0.8668);transform-origin:0 0;">Power</div>
<svg class="r" style="left:612.0px;top:574.8px" width="13" height="19.5" viewBox="0 0 13 19.5"><path d="M3.6 0.6H10Q12.4 0.6 12.4 3V16.4Q12.4 18.9 10 18.9H3.6L0.6 15.8V3.7Z" fill="#0a820e" stroke="#102010" stroke-width="0.9"/><ellipse cx="8" cy="4.6" rx="1.4" ry="1" fill="#244" stroke="#8b8" stroke-width="0.5"/><ellipse cx="4.9" cy="9.7" rx="1.4" ry="1" fill="#244" stroke="#8b8" stroke-width="0.5"/><ellipse cx="8" cy="14.8" rx="1.4" ry="1" fill="#244" stroke="#8b8" stroke-width="0.5"/></svg>
<div class="r" style="left:551.7px;top:605.2px;width:84.7px;height:35.8px;background:linear-gradient(160deg,#e8f0f8,#d8e5f2);border:1px solid #b9b9b9;box-sizing:border-box"></div>
<div class="t" style="left:582.0px;top:614.5px;font-size:10.5px;color:#333;letter-spacing:0.000px;transform:scaleX(0.8668);transform-origin:0 0;">Power</div>
<svg class="r" style="left:612.0px;top:610.7px" width="13" height="19.5" viewBox="0 0 13 19.5"><path d="M3.6 0.6H10Q12.4 0.6 12.4 3V16.4Q12.4 18.9 10 18.9H3.6L0.6 15.8V3.7Z" fill="#0a820e" stroke="#102010" stroke-width="0.9"/><ellipse cx="8" cy="4.6" rx="1.4" ry="1" fill="#244" stroke="#8b8" stroke-width="0.5"/><ellipse cx="4.9" cy="9.7" rx="1.4" ry="1" fill="#244" stroke="#8b8" stroke-width="0.5"/><ellipse cx="8" cy="14.8" rx="1.4" ry="1" fill="#244" stroke="#8b8" stroke-width="0.5"/></svg>
<div class="r" style="left:647.4px;top:579.3px;width:17.9px;height:54.1px;background:#ebebeb;border:1px solid #d4d4d4;box-sizing:border-box"></div>
<div class="r" style="left:695.0px;top:570.6px;width:118.0px;height:14.2px;background:#e5e5e5;border:1px solid #efefef;box-sizing:border-box"></div>
<div class="t" style="left:742.5px;top:573.6px;font-size:10px;color:#c6c6c6;letter-spacing:0.000px;transform:scaleX(0.9196);transform-origin:0 0;">PCI 7</div>
<div class="r" style="left:695.0px;top:587.5px;width:118.0px;height:14.8px;background:#e5e5e5;border:1px solid #efefef;box-sizing:border-box"></div>
<div class="t" style="left:742.5px;top:590.8px;font-size:10px;color:#c6c6c6;letter-spacing:0.000px;transform:scaleX(0.9196);transform-origin:0 0;">PCI 6</div>
<div class="r" style="left:820.7px;top:570.7px;width:117.6px;height:13.6px;background:#e5e5e5;border:1px solid #efefef;box-sizing:border-box"></div>
<div class="t" style="left:868.0px;top:573.4px;font-size:10px;color:#c6c6c6;letter-spacing:0.000px;transform:scaleX(0.9196);transform-origin:0 0;">PCI 4</div>
<div class="r" style="left:820.7px;top:588.0px;width:117.6px;height:14.0px;background:#e5e5e5;border:1px solid #efefef;box-sizing:border-box"></div>
<div class="t" style="left:868.0px;top:590.9px;font-size:10px;color:#c6c6c6;letter-spacing:0.000px;transform:scaleX(0.9196);transform-origin:0 0;">PCI 3</div>
<div class="r" style="left:716.3px;top:606.8px;width:68.9px;height:13.8px;background:#e5e5e5;border:1px solid #efefef;box-sizing:border-box"></div>
<div class="t" style="left:739.2px;top:609.6px;font-size:10px;color:#c6c6c6;letter-spacing:0.000px;transform:scaleX(0.9196);transform-origin:0 0;">PCI 5</div>
<div class="r" style="left:859.3px;top:620.3px;width:73.3px;height:11.8px;background:#e5e5e5;border:1px solid #efefef;box-sizing:border-box"></div>
<div class="t" style="left:873.0px;top:623.0px;font-size:7.8px;color:#c9c9c9;letter-spacing:0.000px;transform:scaleX(1.0094);transform-origin:0 0;">DinamicLOM</div>
<svg class="r" style="left:684.6px;top:624.7px" width="22" height="9" viewBox="0 0 22 9"><rect x="0.5" y="0.5" width="21" height="8" rx="1.5" fill="#f4f4f4" stroke="#555" stroke-width="1"/><path d="M4 2H18L16.5 7H5.5Z" fill="#3b5cb0" stroke="#223" stroke-width="0.6"/></svg>
<svg class="r" style="left:729.0px;top:624.7px" width="21" height="9" viewBox="0 0 21 9"><rect x="0.5" y="0.5" width="20" height="8" rx="1.5" fill="#f4f4f4" stroke="#555" stroke-width="1"/><path d="M4 2H17L15.5 7H5.5Z" fill="#3b5cb0" stroke="#223" stroke-width="0.6"/></svg>
<div class="t" style="left:685.0px;top:632.8px;font-size:10px;color:#222;letter-spacing:0.000px;transform:scaleX(0.9001);transform-origin:0 0;">COM</div>
<div class="t" style="left:726.6px;top:632.8px;font-size:10px;color:#222;letter-spacing:0.000px;transform:scaleX(0.8994);transform-origin:0 0;">VGA 2</div>
<svg class="r" style="left:809.0px;top:624.6px" width="8" height="7.5" viewBox="0 0 8 7.5"><path d="M0.5 7V3.2L4 0.5L7.5 3.2V7Z" fill="#2a4a9a" stroke="#1a2a4a" stroke-width="0.7"/><rect x="1.5" y="4.4" width="5" height="1.2" fill="#9ab"/></svg>
<div class="t" style="left:797.4px;top:631.4px;font-size:10px;color:#222;letter-spacing:0.000px;transform:scaleX(0.9330);transform-origin:0 0;">MGMT</div>
<div class="t" style="left:825.4px;top:608.7px;font-size:10px;color:#222;letter-spacing:0.000px;transform:scaleX(0.8754);transform-origin:0 0;">USB 3</div>
<div class="r" style="left:834.3px;top:619.3px;width:9.3px;height:5.0px;background:#16223e;box-shadow:inset 0 1.5px 0 #3a4a6a"></div>
<div class="r" style="left:834.3px;top:629.3px;width:9.3px;height:5.0px;background:#16223e;box-shadow:inset 0 1.5px 0 #3a4a6a"></div>
<div class="t" style="left:825.4px;top:634.1px;font-size:10px;color:#222;letter-spacing:0.000px;transform:scaleX(0.8754);transform-origin:0 0;">USB 4</div>
<div class="r" style="left:956.9px;top:579.7px;width:18.0px;height:53.4px;background:linear-gradient(90deg,#e6eef7,#d5e2f0);box-shadow:0 0 0 0.6px #c8ccd2"></div>
<svg class="r" style="left:960.5px;top:587.1px" width="8" height="8" viewBox="0 0 8 8"><path d="M7.6 0.5H3.6Q0.4 1.2 0.4 4Q0.4 6.8 3.6 7.5H7.6Z" fill="#17901a" stroke="#1a1a2a" stroke-width="0.7"/><rect x="5.2" y="1" width="2.2" height="6" fill="#b9bcc0"/></svg>
<div class="t" style="left:968.7px;top:586.5px;font-size:10.5px;color:#333;letter-spacing:0.000px;">1</div>
<svg class="r" style="left:960.5px;top:599.0px" width="8" height="8" viewBox="0 0 8 8"><path d="M7.6 0.5H3.6Q0.4 1.2 0.4 4Q0.4 6.8 3.6 7.5H7.6Z" fill="#1e3f8f" stroke="#1a1a2a" stroke-width="0.7"/><rect x="5.2" y="1" width="2.2" height="6" fill="#b9bcc0"/></svg>
<div class="t" style="left:968.7px;top:598.4px;font-size:10.5px;color:#333;letter-spacing:0.000px;">2</div>
<svg class="r" style="left:960.5px;top:611.0px" width="8" height="8" viewBox="0 0 8 8"><path d="M7.6 0.5H3.6Q0.4 1.2 0.4 4Q0.4 6.8 3.6 7.5H7.6Z" fill="#1e3f8f" stroke="#1a1a2a" stroke-width="0.7"/><rect x="5.2" y="1" width="2.2" height="6" fill="#b9bcc0"/></svg>
<div class="t" style="left:968.7px;top:610.4px;font-size:10.5px;color:#333;letter-spacing:0.000px;">3</div>
<svg class="r" style="left:960.5px;top:622.9px" width="8" height="8" viewBox="0 0 8 8"><path d="M7.6 0.5H3.6Q0.4 1.2 0.4 4Q0.4 6.8 3.6 7.5H7.6Z" fill="#1e3f8f" stroke="#1a1a2a" stroke-width="0.7"/><rect x="5.2" y="1" width="2.2" height="6" fill="#b9bcc0"/></svg>
<div class="t" style="left:968.7px;top:622.3px;font-size:10.5px;color:#333;letter-spacing:0.000px;">4</div>
<div class="r" style="left:981.1px;top:579.7px;width:18.0px;height:53.4px;background:linear-gradient(90deg,#e6eef7,#d5e2f0);box-shadow:0 0 0 0.6px #c8ccd2"></div>
<svg class="r" style="left:984.7px;top:587.1px" width="8" height="8" viewBox="0 0 8 8"><path d="M7.6 0.5H3.6Q0.4 1.2 0.4 4Q0.4 6.8 3.6 7.5H7.6Z" fill="#17901a" stroke="#1a1a2a" stroke-width="0.7"/><rect x="5.2" y="1" width="2.2" height="6" fill="#b9bcc0"/></svg>
<div class="t" style="left:992.9px;top:586.5px;font-size:10.5px;color:#333;letter-spacing:0.000px;">1</div>
<svg class="r" style="left:984.7px;top:599.0px" width="8" height="8" viewBox="0 0 8 8"><path d="M7.6 0.5H3.6Q0.4 1.2 0.4 4Q0.4 6.8 3.6 7.5H7.6Z" fill="#1e3f8f" stroke="#1a1a2a" stroke-width="0.7"/><rect x="5.2" y="1" width="2.2" height="6" fill="#b9bcc0"/></svg>
<div class="t" style="left:992.9px;top:598.4px;font-size:10.5px;color:#333;letter-spacing:0.000px;">2</div>
<svg class="r" style="left:984.7px;top:611.0px" width="8" height="8" viewBox="0 0 8 8"><path d="M7.6 0.5H3.6Q0.4 1.2 0.4 4Q0.4 6.8 3.6 7.5H7.6Z" fill="#1e3f8f" stroke="#1a1a2a" stroke-width="0.7"/><rect x="5.2" y="1" width="2.2" height="6" fill="#b9bcc0"/></svg>
<div class="t" style="left:992.9px;top:610.4px;font-size:10.5px;color:#333;letter-spacing:0.000px;">3</div>
<svg class="r" style="left:984.7px;top:622.9px" width="8" height="8" viewBox="0 0 8 8"><path d="M7.6 0.5H3.6Q0.4 1.2 0.4 4Q0.4 6.8 3.6 7.5H7.6Z" fill="#1e3f8f" stroke="#1a1a2a" stroke-width="0.7"/><rect x="5.2" y="1" width="2.2" height="6" fill="#b9bcc0"/></svg>
<div class="t" style="left:992.9px;top:622.3px;font-size:10.5px;color:#333;letter-spacing:0.000px;">4</div>
<div class="r" style="left:526.0px;top:645.9px;width:521.5px;height:97.2px;background:#bdbdc2"></div>
<div class="r" style="left:526.0px;top:646.2px;width:521.4px;height:94.3px;background:#fff"></div>
<div class="r" style="left:527.0px;top:646.7px;width:519.4px;height:16.4px;background:linear-gradient(#96bde7 0%,#8fb3de 55%,#92a1b4 80%,#838a95 100%)"></div>
<div class="t" style="left:530.8px;top:649.1px;font-size:12.6px;color:#eef5fb;letter-spacing:0.000px;transform:scaleX(0.8446);transform-origin:0 0;">FILESRV02</div>
<div class="t" style="left:1018.9px;top:650.1px;font-size:11.5px;color:#eef5fb;letter-spacing:0.000px;">F</div>
<div class="t" style="left:1032.4px;top:650.1px;font-size:11.5px;color:#eef5fb;letter-spacing:0.000px;">R</div>
<div class="r" style="left:527.0px;top:664.5px;width:519.4px;height:74.9px;background:linear-gradient(160deg,#e0e0e0,#cbcbcb)"></div>
<div class="r" style="left:551.7px;top:667.8px;width:84.7px;height:35.6px;background:linear-gradient(160deg,#e8f0f8,#d8e5f2);border:1px solid #b9b9b9;box-sizing:border-box"></div>
<div class="t" style="left:582.0px;top:676.0px;font-size:10.5px;color:#333;letter-spacing:0.000px;transform:scaleX(0.8668);transform-origin:0 0;">Power</div>
<svg class="r" style="left:612.0px;top:672.2px" width="13" height="19.5" viewBox="0 0 13 19.5"><path d="M3.6 0.6H10Q12.4 0.6 12.4 3V16.4Q12.4 18.9 10 18.9H3.6L0.6 15.8V3.7Z" fill="#0a820e" stroke="#102010" stroke-width="0.9"/><ellipse cx="8" cy="4.6" rx="1.4" ry="1" fill="#244" stroke="#8b8" stroke-width="0.5"/><ellipse cx="4.9" cy="9.7" rx="1.4" ry="1" fill="#244" stroke="#8b8" stroke-width="0.5"/><ellipse cx="8" cy="14.8" rx="1.4" ry="1" fill="#244" stroke="#8b8" stroke-width="0.5"/></svg>
<div class="r" style="left:551.7px;top:702.6px;width:84.7px;height:35.8px;background:linear-gradient(160deg,#e8f0f8,#d8e5f2);border:1px solid #b9b9b9;box-sizing:border-box"></div>
<div class="t" style="left:582.0px;top:711.9px;font-size:10.5px;color:#333;letter-spacing:0.000px;transform:scaleX(0.8668);transform-origin:0 0;">Power</div>
<svg class="r" style="left:612.0px;top:708.1px" width="13" height="19.5" viewBox="0 0 13 19.5"><path d="M3.6 0.6H10Q12.4 0.6 12.4 3V16.4Q12.4 18.9 10 18.9H3.6L0.6 15.8V3.7Z" fill="#0a820e" stroke="#102010" stroke-width="0.9"/><ellipse cx="8" cy="4.6" rx="1.4" ry="1" fill="#244" stroke="#8b8" stroke-width="0.5"/><ellipse cx="4.9" cy="9.7" rx="1.4" ry="1" fill="#244" stroke="#8b8" stroke-width="0.5"/><ellipse cx="8" cy="14.8" rx="1.4" ry="1" fill="#244" stroke="#8b8" stroke-width="0.5"/></svg>
<div class="r" style="left:647.4px;top:676.7px;width:17.9px;height:54.1px;background:#ebebeb;border:1px solid #d4d4d4;box-sizing:border-box"></div>
<div class="r" style="left:695.0px;top:668.0px;width:118.0px;height:14.2px;background:#e5e5e5;border:1px solid #efefef;box-sizing:border-box"></div>
<div class="t" style="left:742.5px;top:671.0px;font-size:10px;color:#c6c6c6;letter-spacing:0.000px;transform:scaleX(0.9196);transform-origin:0 0;">PCI 7</div>
<div class="r" style="left:695.0px;top:684.9px;width:118.0px;height:14.8px;background:#e5e5e5;border:1px solid #efefef;box-sizing:border-box"></div>
<div class="t" style="left:742.5px;top:688.2px;font-size:10px;color:#c6c6c6;letter-spacing:0.000px;transform:scaleX(0.9196);transform-origin:0 0;">PCI 6</div>
<div class="r" style="left:820.7px;top:668.1px;width:117.6px;height:13.6px;background:#e5e5e5;border:1px solid #efefef;box-sizing:border-box"></div>
<div class="t" style="left:868.0px;top:670.8px;font-size:10px;color:#c6c6c6;letter-spacing:0.000px;transform:scaleX(0.9196);transform-origin:0 0;">PCI 4</div>
<div class="r" style="left:820.7px;top:685.4px;width:117.6px;height:14.0px;background:#e5e5e5;border:1px solid #efefef;box-sizing:border-box"></div>
<div class="t" style="left:868.0px;top:688.3px;font-size:10px;color:#c6c6c6;letter-spacing:0.000px;transform:scaleX(0.9196);transform-origin:0 0;">PCI 3</div>
<div class="r" style="left:716.3px;top:704.2px;width:68.9px;height:13.8px;background:#e5e5e5;border:1px solid #efefef;box-sizing:border-box"></div>
<div class="t" style="left:739.2px;top:707.0px;font-size:10px;color:#c6c6c6;letter-spacing:0.000px;transform:scaleX(0.9196);transform-origin:0 0;">PCI 5</div>
<div class="r" style="left:859.3px;top:717.7px;width:73.3px;height:11.8px;background:#e5e5e5;border:1px solid #efefef;box-sizing:border-box"></div>
<div class="t" style="left:873.0px;top:720.4px;font-size:7.8px;color:#c9c9c9;letter-spacing:0.000px;transform:scaleX(1.0094);transform-origin:0 0;">DinamicLOM</div>
<svg class="r" style="left:684.6px;top:722.1px" width="22" height="9" viewBox="0 0 22 9"><rect x="0.5" y="0.5" width="21" height="8" rx="1.5" fill="#f4f4f4" stroke="#555" stroke-width="1"/><path d="M4 2H18L16.5 7H5.5Z" fill="#3b5cb0" stroke="#223" stroke-width="0.6"/></svg>
<svg class="r" style="left:729.0px;top:722.1px" width="21" height="9" viewBox="0 0 21 9"><rect x="0.5" y="0.5" width="20" height="8" rx="1.5" fill="#f4f4f4" stroke="#555" stroke-width="1"/><path d="M4 2H17L15.5 7H5.5Z" fill="#3b5cb0" stroke="#223" stroke-width="0.6"/></svg>
<div class="t" style="left:685.0px;top:730.2px;font-size:10px;color:#222;letter-spacing:0.000px;transform:scaleX(0.9001);transform-origin:0 0;">COM</div>
<div class="t" style="left:726.6px;top:730.2px;font-size:10px;color:#222;letter-spacing:0.000px;transform:scaleX(0.8994);transform-origin:0 0;">VGA 2</div>
<svg class="r" style="left:809.0px;top:722.0px" width="8" height="7.5" viewBox="0 0 8 7.5"><path d="M0.5 7V3.2L4 0.5L7.5 3.2V7Z" fill="#2a4a9a" stroke="#1a2a4a" stroke-width="0.7"/><rect x="1.5" y="4.4" width="5" height="1.2" fill="#9ab"/></svg>
<div class="t" style="left:797.4px;top:728.8px;font-size:10px;color:#222;letter-spacing:0.000px;transform:scaleX(0.9330);transform-origin:0 0;">MGMT</div>
<div class="t" style="left:825.4px;top:706.1px;font-size:10px;color:#222;letter-spacing:0.000px;transform:scaleX(0.8754);transform-origin:0 0;">USB 3</div>
<div class="r" style="left:834.3px;top:716.7px;width:9.3px;height:5.0px;background:#16223e;box-shadow:inset 0 1.5px 0 #3a4a6a"></div>
<div class="r" style="left:834.3px;top:726.7px;width:9.3px;height:5.0px;background:#16223e;box-shadow:inset 0 1.5px 0 #3a4a6a"></div>
<div class="t" style="left:825.4px;top:731.5px;font-size:10px;color:#222;letter-spacing:0.000px;transform:scaleX(0.8754);transform-origin:0 0;">USB 4</div>
<div class="r" style="left:956.9px;top:677.1px;width:18.0px;height:53.4px;background:linear-gradient(90deg,#e6eef7,#d5e2f0);box-shadow:0 0 0 0.6px #c8ccd2"></div>
<svg class="r" style="left:960.5px;top:684.5px" width="8" height="8" viewBox="0 0 8 8"><path d="M7.6 0.5H3.6Q0.4 1.2 0.4 4Q0.4 6.8 3.6 7.5H7.6Z" fill="#17901a" stroke="#1a1a2a" stroke-width="0.7"/><rect x="5.2" y="1" width="2.2" height="6" fill="#b9bcc0"/></svg>
<div class="t" style="left:968.7px;top:683.9px;font-size:10.5px;color:#333;letter-spacing:0.000px;">1</div>
<svg class="r" style="left:960.5px;top:696.4px" width="8" height="8" viewBox="0 0 8 8"><path d="M7.6 0.5H3.6Q0.4 1.2 0.4 4Q0.4 6.8 3.6 7.5H7.6Z" fill="#1e3f8f" stroke="#1a1a2a" stroke-width="0.7"/><rect x="5.2" y="1" width="2.2" height="6" fill="#b9bcc0"/></svg>
<div class="t" style="left:968.7px;top:695.8px;font-size:10.5px;color:#333;letter-spacing:0.000px;">2</div>
<svg class="r" style="left:960.5px;top:708.4px" width="8" height="8" viewBox="0 0 8 8"><path d="M7.6 0.5H3.6Q0.4 1.2 0.4 4Q0.4 6.8 3.6 7.5H7.6Z" fill="#1e3f8f" stroke="#1a1a2a" stroke-width="0.7"/><rect x="5.2" y="1" width="2.2" height="6" fill="#b9bcc0"/></svg>
<div class="t" style="left:968.7px;top:707.8px;font-size:10.5px;color:#333;letter-spacing:0.000px;">3</div>
<svg class="r" style="left:960.5px;top:720.3px" width="8" height="8" viewBox="0 0 8 8"><path d="M7.6 0.5H3.6Q0.4 1.2 0.4 4Q0.4 6.8 3.6 7.5H7.6Z" fill="#1e3f8f" stroke="#1a1a2a" stroke-width="0.7"/><rect x="5.2" y="1" width="2.2" height="6" fill="#b9bcc0"/></svg>
<div class="t" style="left:968.7px;top:719.7px;font-size:10.5px;color:#333;letter-spacing:0.000px;">4</div>
<div class="r" style="left:981.1px;top:677.1px;width:18.0px;height:53.4px;background:linear-gradient(90deg,#e6eef7,#d5e2f0);box-shadow:0 0 0 0.6px #c8ccd2"></div>
<svg class="r" style="left:984.7px;top:684.5px" width="8" height="8" viewBox="0 0 8 8"><path d="M7.6 0.5H3.6Q0.4 1.2 0.4 4Q0.4 6.8 3.6 7.5H7.6Z" fill="#17901a" stroke="#1a1a2a" stroke-width="0.7"/><rect x="5.2" y="1" width="2.2" height="6" fill="#b9bcc0"/></svg>
<div class="t" style="left:992.9px;top:683.9px;font-size:10.5px;color:#333;letter-spacing:0.000px;">1</div>
<svg class="r" style="left:984.7px;top:696.4px" width="8" height="8" viewBox="0 0 8 8"><path d="M7.6 0.5H3.6Q0.4 1.2 0.4 4Q0.4 6.8 3.6 7.5H7.6Z" fill="#1e3f8f" stroke="#1a1a2a" stroke-width="0.7"/><rect x="5.2" y="1" width="2.2" height="6" fill="#b9bcc0"/></svg>
<div class="t" style="left:992.9px;top:695.8px;font-size:10.5px;color:#333;letter-spacing:0.000px;">2</div>
<svg class="r" style="left:984.7px;top:708.4px" width="8" height="8" viewBox="0 0 8 8"><path d="M7.6 0.5H3.6Q0.4 1.2 0.4 4Q0.4 6.8 3.6 7.5H7.6Z" fill="#1e3f8f" stroke="#1a1a2a" stroke-width="0.7"/><rect x="5.2" y="1" width="2.2" height="6" fill="#b9bcc0"/></svg>
<div class="t" style="left:992.9px;top:707.8px;font-size:10.5px;color:#333;letter-spacing:0.000px;">3</div>
<svg class="r" style="left:984.7px;top:720.3px" width="8" height="8" viewBox="0 0 8 8"><path d="M7.6 0.5H3.6Q0.4 1.2 0.4 4Q0.4 6.8 3.6 7.5H7.6Z" fill="#1e3f8f" stroke="#1a1a2a" stroke-width="0.7"/><rect x="5.2" y="1" width="2.2" height="6" fill="#b9bcc0"/></svg>
<div class="t" style="left:992.9px;top:719.7px;font-size:10.5px;color:#333;letter-spacing:0.000px;">4</div>
<div class="r" style="left:526.0px;top:792.0px;width:521.5px;height:97.2px;background:#bdbdc2"></div>
<div class="r" style="left:526.0px;top:792.3px;width:521.4px;height:94.3px;background:#fff"></div>
<div class="r" style="left:527.0px;top:792.8px;width:519.4px;height:16.4px;background:linear-gradient(#96bde7 0%,#8fb3de 55%,#92a1b4 80%,#838a95 100%)"></div>
<div class="t" style="left:530.8px;top:795.2px;font-size:12.6px;color:#eef5fb;letter-spacing:0.000px;transform:scaleX(0.8446);transform-origin:0 0;">FILESRV03</div>
<div class="t" style="left:1018.9px;top:796.2px;font-size:11.5px;color:#eef5fb;letter-spacing:0.000px;">F</div>
<div class="t" style="left:1032.4px;top:796.2px;font-size:11.5px;color:#eef5fb;letter-spacing:0.000px;">R</div>
<div class="r" style="left:527.0px;top:810.6px;width:519.4px;height:74.9px;background:linear-gradient(160deg,#e0e0e0,#cbcbcb)"></div>
<div class="r" style="left:551.7px;top:813.9px;width:84.7px;height:35.6px;background:linear-gradient(160deg,#e8f0f8,#d8e5f2);border:1px solid #b9b9b9;box-sizing:border-box"></div>
<div class="t" style="left:582.0px;top:822.1px;font-size:10.5px;color:#333;letter-spacing:0.000px;transform:scaleX(0.8668);transform-origin:0 0;">Power</div>
<svg class="r" style="left:612.0px;top:818.3px" width="13" height="19.5" viewBox="0 0 13 19.5"><path d="M3.6 0.6H10Q12.4 0.6 12.4 3V16.4Q12.4 18.9 10 18.9H3.6L0.6 15.8V3.7Z" fill="#0a820e" stroke="#102010" stroke-width="0.9"/><ellipse cx="8" cy="4.6" rx="1.4" ry="1" fill="#244" stroke="#8b8" stroke-width="0.5"/><ellipse cx="4.9" cy="9.7" rx="1.4" ry="1" fill="#244" stroke="#8b8" stroke-width="0.5"/><ellipse cx="8" cy="14.8" rx="1.4" ry="1" fill="#244" stroke="#8b8" stroke-width="0.5"/></svg>
<div class="r" style="left:551.7px;top:848.7px;width:84.7px;height:35.8px;background:linear-gradient(160deg,#e8f0f8,#d8e5f2);border:1px solid #b9b9b9;box-sizing:border-box"></div>
<div class="t" style="left:582.0px;top:858.0px;font-size:10.5px;color:#333;letter-spacing:0.000px;transform:scaleX(0.8668);transform-origin:0 0;">Power</div>
<svg class="r" style="left:612.0px;top:854.2px" width="13" height="19.5" viewBox="0 0 13 19.5"><path d="M3.6 0.6H10Q12.4 0.6 12.4 3V16.4Q12.4 18.9 10 18.9H3.6L0.6 15.8V3.7Z" fill="#0a820e" stroke="#102010" stroke-width="0.9"/><ellipse cx="8" cy="4.6" rx="1.4" ry="1" fill="#244" stroke="#8b8" stroke-width="0.5"/><ellipse cx="4.9" cy="9.7" rx="1.4" ry="1" fill="#244" stroke="#8b8" stroke-width="0.5"/><ellipse cx="8" cy="14.8" rx="1.4" ry="1" fill="#244" stroke="#8b8" stroke-width="0.5"/></svg>
<div class="r" style="left:647.4px;top:822.8px;width:17.9px;height:54.1px;background:#ebebeb;border:1px solid #d4d4d4;box-sizing:border-box"></div>
<div class="r" style="left:695.0px;top:814.1px;width:118.0px;height:14.2px;background:#e5e5e5;border:1px solid #efefef;box-sizing:border-box"></div>
<div class="t" style="left:742.5px;top:817.1px;font-size:10px;color:#c6c6c6;letter-spacing:0.000px;transform:scaleX(0.9196);transform-origin:0 0;">PCI 7</div>
<div class="r" style="left:695.0px;top:831.0px;width:118.0px;height:14.8px;background:#e5e5e5;border:1px solid #efefef;box-sizing:border-box"></div>
<div class="t" style="left:742.5px;top:834.3px;font-size:10px;color:#c6c6c6;letter-spacing:0.000px;transform:scaleX(0.9196);transform-origin:0 0;">PCI 6</div>
<div class="r" style="left:820.7px;top:814.2px;width:117.6px;height:13.6px;background:#e5e5e5;border:1px solid #efefef;box-sizing:border-box"></div>
<div class="t" style="left:868.0px;top:816.9px;font-size:10px;color:#c6c6c6;letter-spacing:0.000px;transform:scaleX(0.9196);transform-origin:0 0;">PCI 4</div>
<div class="r" style="left:820.7px;top:831.5px;width:117.6px;height:14.0px;background:#e5e5e5;border:1px solid #efefef;box-sizing:border-box"></div>
<div class="t" style="left:868.0px;top:834.4px;font-size:10px;color:#c6c6c6;letter-spacing:0.000px;transform:scaleX(0.9196);transform-origin:0 0;">PCI 3</div>
<div class="r" style="left:716.3px;top:850.3px;width:68.9px;height:13.8px;background:#e5e5e5;border:1px solid #efefef;box-sizing:border-box"></div>
<div class="t" style="left:739.2px;top:853.1px;font-size:10px;color:#c6c6c6;letter-spacing:0.000px;transform:scaleX(0.9196);transform-origin:0 0;">PCI 5</div>
<div class="r" style="left:859.3px;top:863.8px;width:73.3px;height:11.8px;background:#e5e5e5;border:1px solid #efefef;box-sizing:border-box"></div>
<div class="t" style="left:873.0px;top:866.5px;font-size:7.8px;color:#c9c9c9;letter-spacing:0.000px;transform:scaleX(1.0094);transform-origin:0 0;">DinamicLOM</div>
<svg class="r" style="left:684.6px;top:868.2px" width="22" height="9" viewBox="0 0 22 9"><rect x="0.5" y="0.5" width="21" height="8" rx="1.5" fill="#f4f4f4" stroke="#555" stroke-width="1"/><path d="M4 2H18L16.5 7H5.5Z" fill="#3b5cb0" stroke="#223" stroke-width="0.6"/></svg>
<svg class="r" style="left:729.0px;top:868.2px" width="21" height="9" viewBox="0 0 21 9"><rect x="0.5" y="0.5" width="20" height="8" rx="1.5" fill="#f4f4f4" stroke="#555" stroke-width="1"/><path d="M4 2H17L15.5 7H5.5Z" fill="#3b5cb0" stroke="#223" stroke-width="0.6"/></svg>
<div class="t" style="left:685.0px;top:876.3px;font-size:10px;color:#222;letter-spacing:0.000px;transform:scaleX(0.9001);transform-origin:0 0;">COM</div>
<div class="t" style="left:726.6px;top:876.3px;font-size:10px;color:#222;letter-spacing:0.000px;transform:scaleX(0.8994);transform-origin:0 0;">VGA 2</div>
<svg class="r" style="left:809.0px;top:868.1px" width="8" height="7.5" viewBox="0 0 8 7.5"><path d="M0.5 7V3.2L4 0.5L7.5 3.2V7Z" fill="#2a4a9a" stroke="#1a2a4a" stroke-width="0.7"/><rect x="1.5" y="4.4" width="5" height="1.2" fill="#9ab"/></svg>
<div class="t" style="left:797.4px;top:874.9px;font-size:10px;color:#222;letter-spacing:0.000px;transform:scaleX(0.9330);transform-origin:0 0;">MGMT</div>
<div class="t" style="left:825.4px;top:852.2px;font-size:10px;color:#222;letter-spacing:0.000px;transform:scaleX(0.8754);transform-origin:0 0;">USB 3</div>
<div class="r" style="left:834.3px;top:862.8px;width:9.3px;height:5.0px;background:#16223e;box-shadow:inset 0 1.5px 0 #3a4a6a"></div>
<div class="r" style="left:834.3px;top:872.8px;width:9.3px;height:5.0px;background:#16223e;box-shadow:inset 0 1.5px 0 #3a4a6a"></div>
<div class="t" style="left:825.4px;top:877.6px;font-size:10px;color:#222;letter-spacing:0.000px;transform:scaleX(0.8754);transform-origin:0 0;">USB 4</div>
<div class="r" style="left:956.9px;top:823.2px;width:18.0px;height:53.4px;background:linear-gradient(90deg,#e6eef7,#d5e2f0);box-shadow:0 0 0 0.6px #c8ccd2"></div>
<svg class="r" style="left:960.5px;top:830.6px" width="8" height="8" viewBox="0 0 8 8"><path d="M7.6 0.5H3.6Q0.4 1.2 0.4 4Q0.4 6.8 3.6 7.5H7.6Z" fill="#17901a" stroke="#1a1a2a" stroke-width="0.7"/><rect x="5.2" y="1" width="2.2" height="6" fill="#b9bcc0"/></svg>
<div class="t" style="left:968.7px;top:830.0px;font-size:10.5px;color:#333;letter-spacing:0.000px;">1</div>
<svg class="r" style="left:960.5px;top:842.5px" width="8" height="8" viewBox="0 0 8 8"><path d="M7.6 0.5H3.6Q0.4 1.2 0.4 4Q0.4 6.8 3.6 7.5H7.6Z" fill="#1e3f8f" stroke="#1a1a2a" stroke-width="0.7"/><rect x="5.2" y="1" width="2.2" height="6" fill="#b9bcc0"/></svg>
<div class="t" style="left:968.7px;top:841.9px;font-size:10.5px;color:#333;letter-spacing:0.000px;">2</div>
<svg class="r" style="left:960.5px;top:854.5px" width="8" height="8" viewBox="0 0 8 8"><path d="M7.6 0.5H3.6Q0.4 1.2 0.4 4Q0.4 6.8 3.6 7.5H7.6Z" fill="#1e3f8f" stroke="#1a1a2a" stroke-width="0.7"/><rect x="5.2" y="1" width="2.2" height="6" fill="#b9bcc0"/></svg>
<div class="t" style="left:968.7px;top:853.9px;font-size:10.5px;color:#333;letter-spacing:0.000px;">3</div>
<svg class="r" style="left:960.5px;top:866.4px" width="8" height="8" viewBox="0 0 8 8"><path d="M7.6 0.5H3.6Q0.4 1.2 0.4 4Q0.4 6.8 3.6 7.5H7.6Z" fill="#1e3f8f" stroke="#1a1a2a" stroke-width="0.7"/><rect x="5.2" y="1" width="2.2" height="6" fill="#b9bcc0"/></svg>
<div class="t" style="left:968.7px;top:865.8px;font-size:10.5px;color:#333;letter-spacing:0.000px;">4</div>
<div class="r" style="left:981.1px;top:823.2px;width:18.0px;height:53.4px;background:linear-gradient(90deg,#e6eef7,#d5e2f0);box-shadow:0 0 0 0.6px #c8ccd2"></div>
<svg class="r" style="left:984.7px;top:830.6px" width="8" height="8" viewBox="0 0 8 8"><path d="M7.6 0.5H3.6Q0.4 1.2 0.4 4Q0.4 6.8 3.6 7.5H7.6Z" fill="#17901a" stroke="#1a1a2a" stroke-width="0.7"/><rect x="5.2" y="1" width="2.2" height="6" fill="#b9bcc0"/></svg>
<div class="t" style="left:992.9px;top:830.0px;font-size:10.5px;color:#333;letter-spacing:0.000px;">1</div>
<svg class="r" style="left:984.7px;top:842.5px" width="8" height="8" viewBox="0 0 8 8"><path d="M7.6 0.5H3.6Q0.4 1.2 0.4 4Q0.4 6.8 3.6 7.5H7.6Z" fill="#1e3f8f" stroke="#1a1a2a" stroke-width="0.7"/><rect x="5.2" y="1" width="2.2" height="6" fill="#b9bcc0"/></svg>
<div class="t" style="left:992.9px;top:841.9px;font-size:10.5px;color:#333;letter-spacing:0.000px;">2</div>
<svg class="r" style="left:984.7px;top:854.5px" width="8" height="8" viewBox="0 0 8 8"><path d="M7.6 0.5H3.6Q0.4 1.2 0.4 4Q0.4 6.8 3.6 7.5H7.6Z" fill="#1e3f8f" stroke="#1a1a2a" stroke-width="0.7"/><rect x="5.2" y="1" width="2.2" height="6" fill="#b9bcc0"/></svg>
<div class="t" style="left:992.9px;top:853.9px;font-size:10.5px;color:#333;letter-spacing:0.000px;">3</div>
<svg class="r" style="left:984.7px;top:866.4px" width="8" height="8" viewBox="0 0 8 8"><path d="M7.6 0.5H3.6Q0.4 1.2 0.4 4Q0.4 6.8 3.6 7.5H7.6Z" fill="#1e3f8f" stroke="#1a1a2a" stroke-width="0.7"/><rect x="5.2" y="1" width="2.2" height="6" fill="#b9bcc0"/></svg>
<div class="t" style="left:992.9px;top:865.8px;font-size:10.5px;color:#333;letter-spacing:0.000px;">4</div>
<div class="r" style="left:526.0px;top:889.4px;width:521.5px;height:97.2px;background:#bdbdc2"></div>
<div class="r" style="left:526.0px;top:889.7px;width:521.4px;height:94.3px;background:#fff"></div>
<div class="r" style="left:527.0px;top:890.2px;width:519.4px;height:16.4px;background:linear-gradient(#96bde7 0%,#8fb3de 55%,#92a1b4 80%,#838a95 100%)"></div>
<div class="t" style="left:530.8px;top:892.6px;font-size:12.6px;color:#eef5fb;letter-spacing:0.000px;transform:scaleX(0.8446);transform-origin:0 0;">FILESRV04</div>
<div class="t" style="left:1018.9px;top:893.6px;font-size:11.5px;color:#eef5fb;letter-spacing:0.000px;">F</div>
<div class="t" style="left:1032.4px;top:893.6px;font-size:11.5px;color:#eef5fb;letter-spacing:0.000px;">R</div>
<div class="r" style="left:527.0px;top:908.0px;width:519.4px;height:74.9px;background:linear-gradient(160deg,#e0e0e0,#cbcbcb)"></div>
<div class="r" style="left:551.7px;top:911.3px;width:84.7px;height:35.6px;background:linear-gradient(160deg,#e8f0f8,#d8e5f2);border:1px solid #b9b9b9;box-sizing:border-box"></div>
<div class="t" style="left:582.0px;top:919.5px;font-size:10.5px;color:#333;letter-spacing:0.000px;transform:scaleX(0.8668);transform-origin:0 0;">Power</div>
<svg class="r" style="left:612.0px;top:915.7px" width="13" height="19.5" viewBox="0 0 13 19.5"><path d="M3.6 0.6H10Q12.4 0.6 12.4 3V16.4Q12.4 18.9 10 18.9H3.6L0.6 15.8V3.7Z" fill="#0a820e" stroke="#102010" stroke-width="0.9"/><ellipse cx="8" cy="4.6" rx="1.4" ry="1" fill="#244" stroke="#8b8" stroke-width="0.5"/><ellipse cx="4.9" cy="9.7" rx="1.4" ry="1" fill="#244" stroke="#8b8" stroke-width="0.5"/><ellipse cx="8" cy="14.8" rx="1.4" ry="1" fill="#244" stroke="#8b8" stroke-width="0.5"/></svg>
<div class="r" style="left:551.7px;top:946.1px;width:84.7px;height:35.8px;background:linear-gradient(160deg,#e8f0f8,#d8e5f2);border:1px solid #b9b9b9;box-sizing:border-box"></div>
<div class="t" style="left:582.0px;top:955.4px;font-size:10.5px;color:#333;letter-spacing:0.000px;transform:scaleX(0.8668);transform-origin:0 0;">Power</div>
<svg class="r" style="left:612.0px;top:951.6px" width="13" height="19.5" viewBox="0 0 13 19.5"><path d="M3.6 0.6H10Q12.4 0.6 12.4 3V16.4Q12.4 18.9 10 18.9H3.6L0.6 15.8V3.7Z" fill="#0a820e" stroke="#102010" stroke-width="0.9"/><ellipse cx="8" cy="4.6" rx="1.4" ry="1" fill="#244" stroke="#8b8" stroke-width="0.5"/><ellipse cx="4.9" cy="9.7" rx="1.4" ry="1" fill="#244" stroke="#8b8" stroke-width="0.5"/><ellipse cx="8" cy="14.8" rx="1.4" ry="1" fill="#244" stroke="#8b8" stroke-width="0.5"/></svg>
<div class="r" style="left:647.4px;top:920.2px;width:17.9px;height:54.1px;background:#ebebeb;border:1px solid #d4d4d4;box-sizing:border-box"></div>
<div class="r" style="left:695.0px;top:911.5px;width:118.0px;height:14.2px;background:#e5e5e5;border:1px solid #efefef;box-sizing:border-box"></div>
<div class="t" style="left:742.5px;top:914.5px;font-size:10px;color:#c6c6c6;letter-spacing:0.000px;transform:scaleX(0.9196);transform-origin:0 0;">PCI 7</div>
<div class="r" style="left:695.0px;top:928.4px;width:118.0px;height:14.8px;background:#e5e5e5;border:1px solid #efefef;box-sizing:border-box"></div>
<div class="t" style="left:742.5px;top:931.7px;font-size:10px;color:#c6c6c6;letter-spacing:0.000px;transform:scaleX(0.9196);transform-origin:0 0;">PCI 6</div>
<div class="r" style="left:820.7px;top:911.6px;width:117.6px;height:13.6px;background:#e5e5e5;border:1px solid #efefef;box-sizing:border-box"></div>
<div class="t" style="left:868.0px;top:914.3px;font-size:10px;color:#c6c6c6;letter-spacing:0.000px;transform:scaleX(0.9196);transform-origin:0 0;">PCI 4</div>
<div class="r" style="left:820.7px;top:928.9px;width:117.6px;height:14.0px;background:#e5e5e5;border:1px solid #efefef;box-sizing:border-box"></div>
<div class="t" style="left:868.0px;top:931.8px;font-size:10px;color:#c6c6c6;letter-spacing:0.000px;transform:scaleX(0.9196);transform-origin:0 0;">PCI 3</div>
<div class="r" style="left:716.3px;top:947.7px;width:68.9px;height:13.8px;background:#e5e5e5;border:1px solid #efefef;box-sizing:border-box"></div>
<div class="t" style="left:739.2px;top:950.5px;font-size:10px;color:#c6c6c6;letter-spacing:0.000px;transform:scaleX(0.9196);transform-origin:0 0;">PCI 5</div>
<div class="r" style="left:859.3px;top:961.2px;width:73.3px;height:11.8px;background:#e5e5e5;border:1px solid #efefef;box-sizing:border-box"></div>
<div class="t" style="left:873.0px;top:963.9px;font-size:7.8px;color:#c9c9c9;letter-spacing:0.000px;transform:scaleX(1.0094);transform-origin:0 0;">DinamicLOM</div>
<svg class="r" style="left:684.6px;top:965.6px" width="22" height="9" viewBox="0 0 22 9"><rect x="0.5" y="0.5" width="21" height="8" rx="1.5" fill="#f4f4f4" stroke="#555" stroke-width="1"/><path d="M4 2H18L16.5 7H5.5Z" fill="#3b5cb0" stroke="#223" stroke-width="0.6"/></svg>
<svg class="r" style="left:729.0px;top:965.6px" width="21" height="9" viewBox="0 0 21 9"><rect x="0.5" y="0.5" width="20" height="8" rx="1.5" fill="#f4f4f4" stroke="#555" stroke-width="1"/><path d="M4 2H17L15.5 7H5.5Z" fill="#3b5cb0" stroke="#223" stroke-width="0.6"/></svg>
<div class="t" style="left:685.0px;top:973.7px;font-size:10px;color:#222;letter-spacing:0.000px;transform:scaleX(0.9001);transform-origin:0 0;">COM</div>
<div class="t" style="left:726.6px;top:973.7px;font-size:10px;color:#222;letter-spacing:0.000px;transform:scaleX(0.8994);transform-origin:0 0;">VGA 2</div>
<svg class="r" style="left:809.0px;top:965.5px" width="8" height="7.5" viewBox="0 0 8 7.5"><path d="M0.5 7V3.2L4 0.5L7.5 3.2V7Z" fill="#2a4a9a" stroke="#1a2a4a" stroke-width="0.7"/><rect x="1.5" y="4.4" width="5" height="1.2" fill="#9ab"/></svg>
<div class="t" style="left:797.4px;top:972.3px;font-size:10px;color:#222;letter-spacing:0.000px;transform:scaleX(0.9330);transform-origin:0 0;">MGMT</div>
<div class="t" style="left:825.4px;top:949.6px;font-size:10px;color:#222;letter-spacing:0.000px;transform:scaleX(0.8754);transform-origin:0 0;">USB 3</div>
<div class="r" style="left:834.3px;top:960.2px;width:9.3px;height:5.0px;background:#16223e;box-shadow:inset 0 1.5px 0 #3a4a6a"></div>
<div class="r" style="left:834.3px;top:970.2px;width:9.3px;height:5.0px;background:#16223e;box-shadow:inset 0 1.5px 0 #3a4a6a"></div>
<div class="t" style="left:825.4px;top:975.0px;font-size:10px;color:#222;letter-spacing:0.000px;transform:scaleX(0.8754);transform-origin:0 0;">USB 4</div>
<div class="r" style="left:956.9px;top:920.6px;width:18.0px;height:53.4px;background:linear-gradient(90deg,#e6eef7,#d5e2f0);box-shadow:0 0 0 0.6px #c8ccd2"></div>
<svg class="r" style="left:960.5px;top:928.0px" width="8" height="8" viewBox="0 0 8 8"><path d="M7.6 0.5H3.6Q0.4 1.2 0.4 4Q0.4 6.8 3.6 7.5H7.6Z" fill="#17901a" stroke="#1a1a2a" stroke-width="0.7"/><rect x="5.2" y="1" width="2.2" height="6" fill="#b9bcc0"/></svg>
<div class="t" style="left:968.7px;top:927.4px;font-size:10.5px;color:#333;letter-spacing:0.000px;">1</div>
<svg class="r" style="left:960.5px;top:939.9px" width="8" height="8" viewBox="0 0 8 8"><path d="M7.6 0.5H3.6Q0.4 1.2 0.4 4Q0.4 6.8 3.6 7.5H7.6Z" fill="#1e3f8f" stroke="#1a1a2a" stroke-width="0.7"/><rect x="5.2" y="1" width="2.2" height="6" fill="#b9bcc0"/></svg>
<div class="t" style="left:968.7px;top:939.3px;font-size:10.5px;color:#333;letter-spacing:0.000px;">2</div>
<svg class="r" style="left:960.5px;top:951.9px" width="8" height="8" viewBox="0 0 8 8"><path d="M7.6 0.5H3.6Q0.4 1.2 0.4 4Q0.4 6.8 3.6 7.5H7.6Z" fill="#1e3f8f" stroke="#1a1a2a" stroke-width="0.7"/><rect x="5.2" y="1" width="2.2" height="6" fill="#b9bcc0"/></svg>
<div class="t" style="left:968.7px;top:951.3px;font-size:10.5px;color:#333;letter-spacing:0.000px;">3</div>
<svg class="r" style="left:960.5px;top:963.8px" width="8" height="8" viewBox="0 0 8 8"><path d="M7.6 0.5H3.6Q0.4 1.2 0.4 4Q0.4 6.8 3.6 7.5H7.6Z" fill="#1e3f8f" stroke="#1a1a2a" stroke-width="0.7"/><rect x="5.2" y="1" width="2.2" height="6" fill="#b9bcc0"/></svg>
<div class="t" style="left:968.7px;top:963.2px;font-size:10.5px;color:#333;letter-spacing:0.000px;">4</div>
<div class="r" style="left:981.1px;top:920.6px;width:18.0px;height:53.4px;background:linear-gradient(90deg,#e6eef7,#d5e2f0);box-shadow:0 0 0 0.6px #c8ccd2"></div>
<svg class="r" style="left:984.7px;top:928.0px" width="8" height="8" viewBox="0 0 8 8"><path d="M7.6 0.5H3.6Q0.4 1.2 0.4 4Q0.4 6.8 3.6 7.5H7.6Z" fill="#17901a" stroke="#1a1a2a" stroke-width="0.7"/><rect x="5.2" y="1" width="2.2" height="6" fill="#b9bcc0"/></svg>
<div class="t" style="left:992.9px;top:927.4px;font-size:10.5px;color:#333;letter-spacing:0.000px;">1</div>
<svg class="r" style="left:984.7px;top:939.9px" width="8" height="8" viewBox="0 0 8 8"><path d="M7.6 0.5H3.6Q0.4 1.2 0.4 4Q0.4 6.8 3.6 7.5H7.6Z" fill="#1e3f8f" stroke="#1a1a2a" stroke-width="0.7"/><rect x="5.2" y="1" width="2.2" height="6" fill="#b9bcc0"/></svg>
<div class="t" style="left:992.9px;top:939.3px;font-size:10.5px;color:#333;letter-spacing:0.000px;">2</div>
<svg class="r" style="left:984.7px;top:951.9px" width="8" height="8" viewBox="0 0 8 8"><path d="M7.6 0.5H3.6Q0.4 1.2 0.4 4Q0.4 6.8 3.6 7.5H7.6Z" fill="#1e3f8f" stroke="#1a1a2a" stroke-width="0.7"/><rect x="5.2" y="1" width="2.2" height="6" fill="#b9bcc0"/></svg>
<div class="t" style="left:992.9px;top:951.3px;font-size:10.5px;color:#333;letter-spacing:0.000px;">3</div>
<svg class="r" style="left:984.7px;top:963.8px" width="8" height="8" viewBox="0 0 8 8"><path d="M7.6 0.5H3.6Q0.4 1.2 0.4 4Q0.4 6.8 3.6 7.5H7.6Z" fill="#1e3f8f" stroke="#1a1a2a" stroke-width="0.7"/><rect x="5.2" y="1" width="2.2" height="6" fill="#b9bcc0"/></svg>
<div class="t" style="left:992.9px;top:963.2px;font-size:10.5px;color:#333;letter-spacing:0.000px;">4</div>
<div class="t" style="left:524.5px;top:466.1px;font-size:9.6px;color:#333;letter-spacing:0.000px;transform:scaleX(0.9650);transform-origin:0 0;">MGMT</div>
<div class="t" style="left:518.7px;top:478.3px;font-size:9.6px;color:#333;letter-spacing:0.000px;transform:scaleX(0.9653);transform-origin:0 0;">Console</div>
<svg class="r" style="left:557.0px;top:466.0px" width="8.5" height="8" viewBox="0 0 8.5 8"><path d="M0.5 7.5V3.5Q4.2 -1.5 8 3.5V7.5Z" fill="#2a4a9a" stroke="#1a2a4a" stroke-width="0.8"/><rect x="1.5" y="4.5" width="5.5" height="1.2" fill="#cde"/></svg>
<svg class="r" style="left:557.0px;top:478.6px" width="8.5" height="8" viewBox="0 0 8.5 8"><path d="M0.5 0.5H8V4Q4.2 8.5 0.5 4Z" fill="#2a4a9a" stroke="#1a2a4a" stroke-width="0.8"/></svg>
<div class="r" style="left:570.4px;top:469.6px;width:6.2px;height:11.8px;background:#26304e;border:1px solid #445;box-sizing:border-box;box-shadow:inset 2px 0 0 #26304e,inset -2px 0 0 #26304e,inset 0 0 0 3px #667"></div>
<div class="t" style="left:565.0px;top:480.6px;font-size:9.6px;color:#222;letter-spacing:0.000px;transform:scaleX(0.8460);transform-origin:0 0;">USB</div>
<div class="r" style="left:589.4px;top:475.0px;width:14.5px;height:9.6px;background:#e9ebee;border:1px solid #c4c4c4;box-sizing:border-box"></div>
<div class="r" style="left:589.4px;top:486.2px;width:14.5px;height:9.6px;background:#e9ebee;border:1px solid #c4c4c4;box-sizing:border-box"></div>
<div class="r" style="left:606.9px;top:475.0px;width:14.5px;height:9.6px;background:#e9ebee;border:1px solid #c4c4c4;box-sizing:border-box"></div>
<div class="r" style="left:606.9px;top:486.2px;width:14.5px;height:9.6px;background:#e9ebee;border:1px solid #c4c4c4;box-sizing:border-box"></div>
<div class="r" style="left:624.5px;top:475.0px;width:14.5px;height:9.6px;background:#e9ebee;border:1px solid #c4c4c4;box-sizing:border-box"></div>
<div class="r" style="left:624.5px;top:486.2px;width:14.5px;height:9.6px;background:#e9ebee;border:1px solid #c4c4c4;box-sizing:border-box"></div>
<div class="r" style="left:642.0px;top:475.0px;width:14.5px;height:9.6px;background:#e9ebee;border:1px solid #c4c4c4;box-sizing:border-box"></div>
<div class="r" style="left:642.0px;top:486.2px;width:14.5px;height:9.6px;background:#e9ebee;border:1px solid #c4c4c4;box-sizing:border-box"></div>
<div class="r" style="left:663.3px;top:475.0px;width:14.5px;height:9.6px;background:#e9ebee;border:1px solid #c4c4c4;box-sizing:border-box"></div>
<div class="r" style="left:663.3px;top:486.2px;width:14.5px;height:9.6px;background:#e9ebee;border:1px solid #c4c4c4;box-sizing:border-box"></div>
<div class="r" style="left:680.8px;top:475.0px;width:14.5px;height:9.6px;background:#e9ebee;border:1px solid #c4c4c4;box-sizing:border-box"></div>
<div class="r" style="left:680.8px;top:486.2px;width:14.5px;height:9.6px;background:#e9ebee;border:1px solid #c4c4c4;box-sizing:border-box"></div>
<div class="r" style="left:698.4px;top:475.0px;width:14.5px;height:9.6px;background:#e9ebee;border:1px solid #c4c4c4;box-sizing:border-box"></div>
<div class="r" style="left:698.4px;top:486.2px;width:14.5px;height:9.6px;background:#e9ebee;border:1px solid #c4c4c4;box-sizing:border-box"></div>
<div class="r" style="left:715.9px;top:475.0px;width:14.5px;height:9.6px;background:#e9ebee;border:1px solid #c4c4c4;box-sizing:border-box"></div>
<div class="r" style="left:715.9px;top:486.2px;width:14.5px;height:9.6px;background:#e9ebee;border:1px solid #c4c4c4;box-sizing:border-box"></div>
<div class="r" style="left:740.2px;top:475.0px;width:14.5px;height:9.6px;background:#e9ebee;border:1px solid #c4c4c4;box-sizing:border-box"></div>
<div class="r" style="left:740.2px;top:486.2px;width:14.5px;height:9.6px;background:#e9ebee;border:1px solid #c4c4c4;box-sizing:border-box"></div>
<div class="r" style="left:757.8px;top:475.0px;width:14.5px;height:9.6px;background:#e9ebee;border:1px solid #c4c4c4;box-sizing:border-box"></div>
<div class="r" style="left:757.8px;top:486.2px;width:14.5px;height:9.6px;background:#e9ebee;border:1px solid #c4c4c4;box-sizing:border-box"></div>
<div class="r" style="left:775.3px;top:475.0px;width:14.5px;height:9.6px;background:#e9ebee;border:1px solid #c4c4c4;box-sizing:border-box"></div>
<div class="r" style="left:775.3px;top:486.2px;width:14.5px;height:9.6px;background:#e9ebee;border:1px solid #c4c4c4;box-sizing:border-box"></div>
<div class="r" style="left:792.9px;top:475.0px;width:14.5px;height:9.6px;background:#e9ebee;border:1px solid #c4c4c4;box-sizing:border-box"></div>
<div class="r" style="left:792.9px;top:486.2px;width:14.5px;height:9.6px;background:#e9ebee;border:1px solid #c4c4c4;box-sizing:border-box"></div>
<div class="r" style="left:814.0px;top:475.0px;width:14.5px;height:9.6px;background:#e9ebee;border:1px solid #c4c4c4;box-sizing:border-box"></div>
<div class="r" style="left:814.0px;top:486.2px;width:14.5px;height:9.6px;background:#e9ebee;border:1px solid #c4c4c4;box-sizing:border-box"></div>
<div class="r" style="left:831.5px;top:475.0px;width:14.5px;height:9.6px;background:#e9ebee;border:1px solid #c4c4c4;box-sizing:border-box"></div>
<div class="r" style="left:831.5px;top:486.2px;width:14.5px;height:9.6px;background:#e9ebee;border:1px solid #c4c4c4;box-sizing:border-box"></div>
<div class="r" style="left:849.1px;top:475.0px;width:14.5px;height:9.6px;background:#e9ebee;border:1px solid #c4c4c4;box-sizing:border-box"></div>
<div class="r" style="left:849.1px;top:486.2px;width:14.5px;height:9.6px;background:#e9ebee;border:1px solid #c4c4c4;box-sizing:border-box"></div>
<div class="r" style="left:866.6px;top:475.0px;width:14.5px;height:9.6px;background:#e9ebee;border:1px solid #c4c4c4;box-sizing:border-box"></div>
<div class="r" style="left:866.6px;top:486.2px;width:14.5px;height:9.6px;background:#e9ebee;border:1px solid #c4c4c4;box-sizing:border-box"></div>
<div class="r" style="left:890.4px;top:475.0px;width:14.5px;height:9.6px;background:#e9ebee;border:1px solid #c4c4c4;box-sizing:border-box"></div>
<div class="r" style="left:890.4px;top:486.2px;width:14.5px;height:9.6px;background:#e9ebee;border:1px solid #c4c4c4;box-sizing:border-box"></div>
<div class="r" style="left:907.9px;top:475.0px;width:14.5px;height:9.6px;background:#e9ebee;border:1px solid #c4c4c4;box-sizing:border-box"></div>
<div class="r" style="left:907.9px;top:486.2px;width:14.5px;height:9.6px;background:#e9ebee;border:1px solid #c4c4c4;box-sizing:border-box"></div>
<div class="r" style="left:925.5px;top:475.0px;width:14.5px;height:9.6px;background:#e9ebee;border:1px solid #c4c4c4;box-sizing:border-box"></div>
<div class="r" style="left:925.5px;top:486.2px;width:14.5px;height:9.6px;background:#e9ebee;border:1px solid #c4c4c4;box-sizing:border-box"></div>
<div class="r" style="left:943.0px;top:475.0px;width:14.5px;height:9.6px;background:#e9ebee;border:1px solid #c4c4c4;box-sizing:border-box"></div>
<div class="r" style="left:943.0px;top:486.2px;width:14.5px;height:9.6px;background:#e9ebee;border:1px solid #c4c4c4;box-sizing:border-box"></div>
<div class="r" style="left:965.0px;top:475.0px;width:14.5px;height:9.6px;background:#e9ebee;border:1px solid #c4c4c4;box-sizing:border-box"></div>
<div class="r" style="left:965.0px;top:486.2px;width:14.5px;height:9.6px;background:#e9ebee;border:1px solid #c4c4c4;box-sizing:border-box"></div>
<div class="r" style="left:982.5px;top:475.0px;width:14.5px;height:9.6px;background:#e9ebee;border:1px solid #c4c4c4;box-sizing:border-box"></div>
<div class="r" style="left:982.5px;top:486.2px;width:14.5px;height:9.6px;background:#e9ebee;border:1px solid #c4c4c4;box-sizing:border-box"></div>
<div class="r" style="left:1000.1px;top:475.0px;width:14.5px;height:9.6px;background:#e9ebee;border:1px solid #c4c4c4;box-sizing:border-box"></div>
<div class="r" style="left:1000.1px;top:486.2px;width:14.5px;height:9.6px;background:#e9ebee;border:1px solid #c4c4c4;box-sizing:border-box"></div>
<div class="r" style="left:1017.6px;top:475.0px;width:14.5px;height:9.6px;background:#e9ebee;border:1px solid #c4c4c4;box-sizing:border-box"></div>
<div class="r" style="left:1017.6px;top:486.2px;width:14.5px;height:9.6px;background:#e9ebee;border:1px solid #c4c4c4;box-sizing:border-box"></div>
<div class="t" style="left:667.8px;top:467.8px;font-size:10px;color:#111;letter-spacing:0.000px;">8</div>
<svg class="r" style="left:666.9px;top:477.6px" width="7.5" height="6.5" viewBox="0 0 7.5 6.5"><path d="M0.3 0.3H7.2V3.6L5 6.2H2.5L0.3 3.6Z" fill="#139a1c" stroke="#1a3a1a" stroke-width="0.6"/><rect x="0.8" y="0.6" width="5.9" height="1.4" fill="#7c7"/></svg>
<div class="t" style="left:665.0px;top:479.1px;font-size:10px;color:#111;letter-spacing:0.000px;">12</div>
<svg class="r" style="left:666.9px;top:488.8px" width="7.5" height="6.5" viewBox="0 0 7.5 6.5"><path d="M0.3 0.3H7.2V3.6L5 6.2H2.5L0.3 3.6Z" fill="#139a1c" stroke="#1a3a1a" stroke-width="0.6"/><rect x="0.8" y="0.6" width="5.9" height="1.4" fill="#7c7"/></svg>
<div class="t" style="left:685.3px;top:467.8px;font-size:10px;color:#111;letter-spacing:0.000px;">9</div>
<svg class="r" style="left:684.4px;top:477.6px" width="7.5" height="6.5" viewBox="0 0 7.5 6.5"><path d="M0.3 0.3H7.2V3.6L5 6.2H2.5L0.3 3.6Z" fill="#139a1c" stroke="#1a3a1a" stroke-width="0.6"/><rect x="0.8" y="0.6" width="5.9" height="1.4" fill="#7c7"/></svg>
<div class="t" style="left:682.5px;top:479.1px;font-size:10px;color:#111;letter-spacing:0.000px;">13</div>
<svg class="r" style="left:684.4px;top:488.8px" width="7.5" height="6.5" viewBox="0 0 7.5 6.5"><path d="M0.3 0.3H7.2V3.6L5 6.2H2.5L0.3 3.6Z" fill="#139a1c" stroke="#1a3a1a" stroke-width="0.6"/><rect x="0.8" y="0.6" width="5.9" height="1.4" fill="#7c7"/></svg>
<div class="t" style="left:700.1px;top:467.8px;font-size:10px;color:#111;letter-spacing:0.000px;">10</div>
<svg class="r" style="left:702.0px;top:477.6px" width="7.5" height="6.5" viewBox="0 0 7.5 6.5"><path d="M0.3 0.3H7.2V3.6L5 6.2H2.5L0.3 3.6Z" fill="#139a1c" stroke="#1a3a1a" stroke-width="0.6"/><rect x="0.8" y="0.6" width="5.9" height="1.4" fill="#7c7"/></svg>
<div class="t" style="left:700.1px;top:479.1px;font-size:10px;color:#111;letter-spacing:0.000px;">14</div>
<svg class="r" style="left:702.0px;top:488.8px" width="7.5" height="6.5" viewBox="0 0 7.5 6.5"><path d="M0.3 0.3H7.2V3.6L5 6.2H2.5L0.3 3.6Z" fill="#139a1c" stroke="#1a3a1a" stroke-width="0.6"/><rect x="0.8" y="0.6" width="5.9" height="1.4" fill="#7c7"/></svg>
<div class="t" style="left:718.0px;top:467.8px;font-size:10px;color:#111;letter-spacing:0.000px;">11</div>
<svg class="r" style="left:719.5px;top:477.6px" width="7.5" height="6.5" viewBox="0 0 7.5 6.5"><path d="M0.3 0.3H7.2V3.6L5 6.2H2.5L0.3 3.6Z" fill="#139a1c" stroke="#1a3a1a" stroke-width="0.6"/><rect x="0.8" y="0.6" width="5.9" height="1.4" fill="#7c7"/></svg>
<div class="t" style="left:717.6px;top:479.1px;font-size:10px;color:#111;letter-spacing:0.000px;">15</div>
<svg class="r" style="left:719.5px;top:488.8px" width="7.5" height="6.5" viewBox="0 0 7.5 6.5"><path d="M0.3 0.3H7.2V3.6L5 6.2H2.5L0.3 3.6Z" fill="#139a1c" stroke="#1a3a1a" stroke-width="0.6"/><rect x="0.8" y="0.6" width="5.9" height="1.4" fill="#7c7"/></svg>
<div class="t" style="left:815.7px;top:467.8px;font-size:10px;color:#111;letter-spacing:0.000px;">24</div>
<svg class="r" style="left:817.6px;top:477.6px" width="7.5" height="6.5" viewBox="0 0 7.5 6.5"><path d="M0.3 0.3H7.2V3.6L5 6.2H2.5L0.3 3.6Z" fill="#139a1c" stroke="#1a3a1a" stroke-width="0.6"/><rect x="0.8" y="0.6" width="5.9" height="1.4" fill="#7c7"/></svg>
<div class="t" style="left:815.7px;top:479.1px;font-size:10px;color:#111;letter-spacing:0.000px;">28</div>
<svg class="r" style="left:817.6px;top:488.8px" width="7.5" height="6.5" viewBox="0 0 7.5 6.5"><path d="M0.3 0.3H7.2V3.6L5 6.2H2.5L0.3 3.6Z" fill="#139a1c" stroke="#1a3a1a" stroke-width="0.6"/><rect x="0.8" y="0.6" width="5.9" height="1.4" fill="#7c7"/></svg>
<div class="t" style="left:833.2px;top:467.8px;font-size:10px;color:#111;letter-spacing:0.000px;">25</div>
<svg class="r" style="left:835.1px;top:477.6px" width="7.5" height="6.5" viewBox="0 0 7.5 6.5"><path d="M0.3 0.3H7.2V3.6L5 6.2H2.5L0.3 3.6Z" fill="#139a1c" stroke="#1a3a1a" stroke-width="0.6"/><rect x="0.8" y="0.6" width="5.9" height="1.4" fill="#7c7"/></svg>
<div class="t" style="left:833.2px;top:479.1px;font-size:10px;color:#111;letter-spacing:0.000px;">29</div>
<svg class="r" style="left:835.1px;top:488.8px" width="7.5" height="6.5" viewBox="0 0 7.5 6.5"><path d="M0.3 0.3H7.2V3.6L5 6.2H2.5L0.3 3.6Z" fill="#139a1c" stroke="#1a3a1a" stroke-width="0.6"/><rect x="0.8" y="0.6" width="5.9" height="1.4" fill="#7c7"/></svg>
<div class="t" style="left:850.8px;top:467.8px;font-size:10px;color:#111;letter-spacing:0.000px;">26</div>
<svg class="r" style="left:852.7px;top:477.6px" width="7.5" height="6.5" viewBox="0 0 7.5 6.5"><path d="M0.3 0.3H7.2V3.6L5 6.2H2.5L0.3 3.6Z" fill="#139a1c" stroke="#1a3a1a" stroke-width="0.6"/><rect x="0.8" y="0.6" width="5.9" height="1.4" fill="#7c7"/></svg>
<div class="t" style="left:850.8px;top:479.1px;font-size:10px;color:#111;letter-spacing:0.000px;">30</div>
<svg class="r" style="left:852.7px;top:488.8px" width="7.5" height="6.5" viewBox="0 0 7.5 6.5"><path d="M0.3 0.3H7.2V3.6L5 6.2H2.5L0.3 3.6Z" fill="#139a1c" stroke="#1a3a1a" stroke-width="0.6"/><rect x="0.8" y="0.6" width="5.9" height="1.4" fill="#7c7"/></svg>
<div class="t" style="left:868.3px;top:467.8px;font-size:10px;color:#111;letter-spacing:0.000px;">27</div>
<svg class="r" style="left:870.2px;top:477.6px" width="7.5" height="6.5" viewBox="0 0 7.5 6.5"><path d="M0.3 0.3H7.2V3.6L5 6.2H2.5L0.3 3.6Z" fill="#139a1c" stroke="#1a3a1a" stroke-width="0.6"/><rect x="0.8" y="0.6" width="5.9" height="1.4" fill="#7c7"/></svg>
<div class="t" style="left:868.3px;top:479.1px;font-size:10px;color:#111;letter-spacing:0.000px;">31</div>
<svg class="r" style="left:870.2px;top:488.8px" width="7.5" height="6.5" viewBox="0 0 7.5 6.5"><path d="M0.3 0.3H7.2V3.6L5 6.2H2.5L0.3 3.6Z" fill="#139a1c" stroke="#1a3a1a" stroke-width="0.6"/><rect x="0.8" y="0.6" width="5.9" height="1.4" fill="#7c7"/></svg>
<div class="t" style="left:966.7px;top:467.8px;font-size:10px;color:#111;letter-spacing:0.000px;">40</div>
<svg class="r" style="left:968.6px;top:477.6px" width="7.5" height="6.5" viewBox="0 0 7.5 6.5"><path d="M0.3 0.3H7.2V3.6L5 6.2H2.5L0.3 3.6Z" fill="#139a1c" stroke="#1a3a1a" stroke-width="0.6"/><rect x="0.8" y="0.6" width="5.9" height="1.4" fill="#7c7"/></svg>
<div class="t" style="left:966.7px;top:479.1px;font-size:10px;color:#111;letter-spacing:0.000px;">44</div>
<svg class="r" style="left:968.6px;top:488.8px" width="7.5" height="6.5" viewBox="0 0 7.5 6.5"><path d="M0.3 0.3H7.2V3.6L5 6.2H2.5L0.3 3.6Z" fill="#139a1c" stroke="#1a3a1a" stroke-width="0.6"/><rect x="0.8" y="0.6" width="5.9" height="1.4" fill="#7c7"/></svg>
<div class="t" style="left:984.2px;top:467.8px;font-size:10px;color:#111;letter-spacing:0.000px;">41</div>
<svg class="r" style="left:986.1px;top:477.6px" width="7.5" height="6.5" viewBox="0 0 7.5 6.5"><path d="M0.3 0.3H7.2V3.6L5 6.2H2.5L0.3 3.6Z" fill="#139a1c" stroke="#1a3a1a" stroke-width="0.6"/><rect x="0.8" y="0.6" width="5.9" height="1.4" fill="#7c7"/></svg>
<div class="t" style="left:984.2px;top:479.1px;font-size:10px;color:#111;letter-spacing:0.000px;">45</div>
<svg class="r" style="left:986.1px;top:488.8px" width="7.5" height="6.5" viewBox="0 0 7.5 6.5"><path d="M0.3 0.3H7.2V3.6L5 6.2H2.5L0.3 3.6Z" fill="#139a1c" stroke="#1a3a1a" stroke-width="0.6"/><rect x="0.8" y="0.6" width="5.9" height="1.4" fill="#7c7"/></svg>
<div class="t" style="left:1001.8px;top:467.8px;font-size:10px;color:#111;letter-spacing:0.000px;">42</div>
<svg class="r" style="left:1003.7px;top:477.6px" width="7.5" height="6.5" viewBox="0 0 7.5 6.5"><path d="M0.3 0.3H7.2V3.6L5 6.2H2.5L0.3 3.6Z" fill="#139a1c" stroke="#1a3a1a" stroke-width="0.6"/><rect x="0.8" y="0.6" width="5.9" height="1.4" fill="#7c7"/></svg>
<div class="t" style="left:1001.8px;top:479.1px;font-size:10px;color:#111;letter-spacing:0.000px;">46</div>
<svg class="r" style="left:1003.7px;top:488.8px" width="7.5" height="6.5" viewBox="0 0 7.5 6.5"><path d="M0.3 0.3H7.2V3.6L5 6.2H2.5L0.3 3.6Z" fill="#139a1c" stroke="#1a3a1a" stroke-width="0.6"/><rect x="0.8" y="0.6" width="5.9" height="1.4" fill="#7c7"/></svg>
<div class="t" style="left:1019.3px;top:467.8px;font-size:10px;color:#111;letter-spacing:0.000px;">43</div>
<svg class="r" style="left:1021.2px;top:477.6px" width="7.5" height="6.5" viewBox="0 0 7.5 6.5"><path d="M0.3 0.3H7.2V3.6L5 6.2H2.5L0.3 3.6Z" fill="#139a1c" stroke="#1a3a1a" stroke-width="0.6"/><rect x="0.8" y="0.6" width="5.9" height="1.4" fill="#7c7"/></svg>
<div class="t" style="left:1019.3px;top:479.1px;font-size:10px;color:#111;letter-spacing:0.000px;">47</div>
<svg class="r" style="left:1021.2px;top:488.8px" width="7.5" height="6.5" viewBox="0 0 7.5 6.5"><path d="M0.3 0.3H7.2V3.6L5 6.2H2.5L0.3 3.6Z" fill="#139a1c" stroke="#1a3a1a" stroke-width="0.6"/><rect x="0.8" y="0.6" width="5.9" height="1.4" fill="#7c7"/></svg>
<div class="t" style="left:593.9px;top:467.8px;font-size:10px;color:#111;letter-spacing:0.000px;">0</div>
<svg class="r" style="left:593.0px;top:479.0px" width="8" height="5.5" viewBox="0 0 8 5.5"><rect x="0" y="0" width="8" height="5.3" fill="#cfd8e0"/><ellipse cx="2.2" cy="3" rx="1.7" ry="2" fill="#555"/><ellipse cx="5.8" cy="3" rx="1.7" ry="2" fill="#555"/><rect x="1.6" y="2.4" width="1.2" height="1.2" fill="#6a6"/><rect x="5.2" y="2.4" width="1.2" height="1.2" fill="#6a6"/></svg>
<div class="t" style="left:611.4px;top:467.8px;font-size:10px;color:#111;letter-spacing:0.000px;">1</div>
<svg class="r" style="left:610.5px;top:479.0px" width="8" height="5.5" viewBox="0 0 8 5.5"><rect x="0" y="0" width="8" height="5.3" fill="#cfd8e0"/><ellipse cx="2.2" cy="3" rx="1.7" ry="2" fill="#555"/><ellipse cx="5.8" cy="3" rx="1.7" ry="2" fill="#555"/><rect x="1.6" y="2.4" width="1.2" height="1.2" fill="#6a6"/><rect x="5.2" y="2.4" width="1.2" height="1.2" fill="#6a6"/></svg>
<div class="r" style="left:44.0px;top:1001.5px;width:1872.0px;height:42.0px;background:#333"></div>
<svg class="r" style="left:1375.0px;top:1008.0px" width="140" height="32" viewBox="0 0 140 32"><path d="M5.6 1.3H1.9V29.8H5.6" fill="none" stroke="#a0a0a0" stroke-width="2"/><path d="M128.3 1.3H131.9V29.8H128.3" fill="none" stroke="#a0a0a0" stroke-width="2"/><path d="M21.5 9.3H16V28.6H44.5V9.3H39" fill="none" stroke="#9a9a9a" stroke-width="1.4"/><path d="M30.2 1.2V21.5M24.2 15.5L30.2 21.5L36.2 15.5" fill="none" stroke="#9a9a9a" stroke-width="1.3"/></svg>
<div class="t" style="left:1428.8px;top:1016.7px;font-size:14px;color:#aaa;letter-spacing:0.000px;transform:scaleX(0.9670);transform-origin:0 0;">Drop here</div>
<div class="t" style="left:1527.2px;top:1009.3px;font-size:11.3px;color:#b5b5b5;letter-spacing:0.000px;transform:scaleX(0.9877);transform-origin:0 0;">Licensed: tripunkt GmbH (Christin)</div>
<div class="t" style="left:1527.2px;top:1027.8px;font-size:11.3px;color:#b5b5b5;letter-spacing:0.000px;transform:scaleX(0.9881);transform-origin:0 0;">Database: localhost\pathfinder_en [SQLite]</div>
<div class="t" style="left:1759.4px;top:1009.3px;font-size:11.3px;color:#b5b5b5;letter-spacing:0.000px;transform:scaleX(0.9951);transform-origin:0 0;">© 2001-2023 tripunkt GmbH</div>
<div class="t" style="left:1759.4px;top:1027.8px;font-size:11.3px;color:#b5b5b5;letter-spacing:0.000px;transform:scaleX(0.9097);transform-origin:0 0;">v3.9.0.376 (64 Bit)</div>
</body></html>
